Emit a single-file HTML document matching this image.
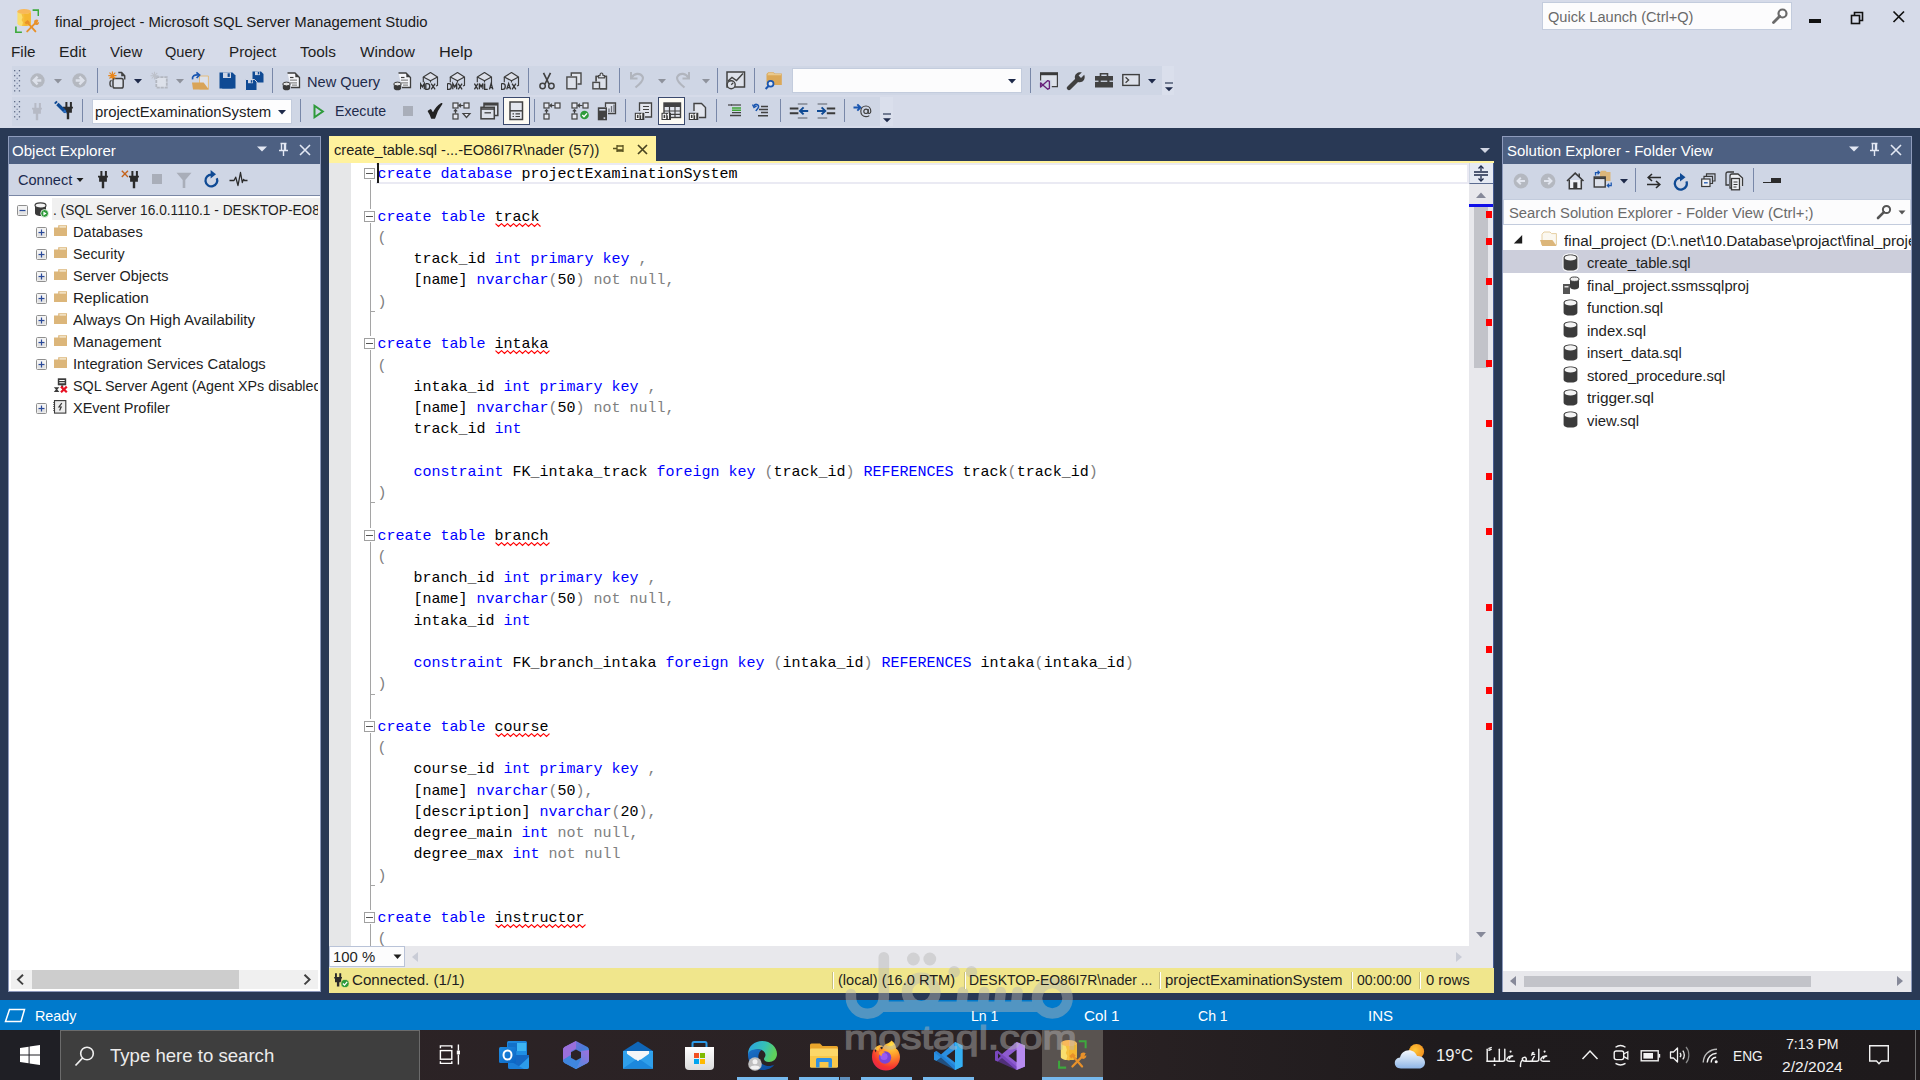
<!DOCTYPE html>
<html><head><meta charset="utf-8"><title>final_project - Microsoft SQL Server Management Studio</title>
<style>
html,body{margin:0;padding:0;}
body{width:1920px;height:1080px;overflow:hidden;position:relative;background:#293955;font-family:"Liberation Sans",sans-serif;}
.t{position:absolute;white-space:pre;transform-origin:0 0;font-family:"Liberation Sans",sans-serif;}
.c{position:absolute;left:377.4px;white-space:pre;font-family:"Liberation Mono",monospace;font-size:15px;line-height:21px;height:21px;color:#000;}
.c b{font-weight:400;color:#0000ff;}
.c i{font-style:normal;color:#808080;}
.c u{text-decoration:none;background:repeat-x left bottom;}
</style></head><body>
<!-- gen_top -->
<div style="position:absolute;left:0px;top:0px;width:1920px;height:128px;background:#D6DBE9;"></div>
<svg style="position:absolute;left:15px;top:8.8px;" width="24.3" height="24.3" viewBox="0 0 24.3 24.3"><path d="M2.4 2.6 V14.4 C2.4 15.9 5.4 17.1 9.1 17.1 C12.8 17.1 15.9 15.9 15.9 14.4 V2.6 Z" fill="#F9DE6E"/>
<path d="M9.1 5 V17.1 C12.8 17.1 15.9 15.9 15.9 14.4 V2.6 C15.9 4 12.8 5 9.1 5 Z" fill="#F5B731"/>
<path d="M6.5 4.9 L7.6 8.5 L6.6 11 L8 13.5 L7 17 L9.1 17.1 V5 Z" fill="#F5B731" opacity="0.8"/>
<ellipse cx="9.15" cy="2.6" rx="6.75" ry="2.5" fill="#F8B85A"/>
<path d="M17.6 1.1 H23.4 V6.9" fill="none" stroke="#3DAA3D" stroke-width="1.7"/>
<path d="M0.9 17.6 V23.4 H6.9" fill="none" stroke="#3DAA3D" stroke-width="1.7"/>
<path d="M12.6 13.6 L20.4 22.4" stroke="#E8912A" stroke-width="1.9" stroke-linecap="round"/>
<path d="M22 12.4 L12.2 22.4" stroke="#E8912A" stroke-width="1.9" stroke-linecap="round"/>
<path d="M9.6 13.6 L12.6 11 L14.9 13.2 L14 14.4 L13 13.8 L11.2 15.6 Z" fill="#E8912A"/>
<path d="M19.6 11.2 C21 10.2 22.6 10.4 23.6 11.4 L21.8 12.6 L22.4 13.8 L24 13 C24.2 14.6 23 16 21.4 16 C19.6 16 18.4 13 19.6 11.2 Z" fill="#E8912A"/></svg>
<span class="t" style="left:55.49px;top:13.00px;font-size:14.7px;line-height:18px;color:#1a1a1a;transform:scaleX(1.0133);">final_project - Microsoft SQL Server Management Studio</span>
<div style="position:absolute;left:1542px;top:2px;width:250px;height:28px;background:#FCFCFD;box-sizing:border-box;border:1px solid #C3CCDD;"></div>
<span class="t" style="left:1547.81px;top:8.00px;font-size:14.7px;line-height:18px;color:#6a6a6a;transform:scaleX(0.9929);">Quick Launch (Ctrl+Q)</span>
<svg style="position:absolute;left:1771px;top:7px;" width="18" height="18" viewBox="0 0 18 18"><circle cx="11.5" cy="6.5" r="4" fill="none" stroke="#6a6a6a" stroke-width="2.2"/><path d="M8.7 9.3 L2.5 15.5" stroke="#6a6a6a" stroke-width="2.8" stroke-linecap="round"/></svg>
<div style="position:absolute;left:1809px;top:19.4px;width:11.6px;height:3.4px;background:#111;"></div>
<svg style="position:absolute;left:1849px;top:10px;" width="16" height="16" viewBox="0 0 16 16"><rect x="2.5" y="5.5" width="8" height="8" fill="none" stroke="#111" stroke-width="1.6"/><path d="M5.5 5 V2.5 H13.5 V10.5 H11" fill="none" stroke="#111" stroke-width="1.6"/></svg>
<svg style="position:absolute;left:1891px;top:9px;" width="16" height="16" viewBox="0 0 16 16"><path d="M2.5 2.5 L13 13 M13 2.5 L2.5 13" stroke="#111" stroke-width="1.7"/></svg>
<span class="t" style="left:10.75px;top:43.00px;font-size:14.7px;line-height:18px;color:#1e1e1e;transform:scaleX(1.0400);">File</span>
<span class="t" style="left:59.01px;top:43.00px;font-size:14.7px;line-height:18px;color:#1e1e1e;transform:scaleX(1.0701);">Edit</span>
<span class="t" style="left:109.93px;top:43.00px;font-size:14.7px;line-height:18px;color:#1e1e1e;transform:scaleX(1.0232);">View</span>
<span class="t" style="left:165.31px;top:43.00px;font-size:14.7px;line-height:18px;color:#1e1e1e;transform:scaleX(0.9922);">Query</span>
<span class="t" style="left:228.75px;top:43.00px;font-size:14.7px;line-height:18px;color:#1e1e1e;transform:scaleX(1.0352);">Project</span>
<span class="t" style="left:299.65px;top:43.00px;font-size:14.7px;line-height:18px;color:#1e1e1e;transform:scaleX(1.0462);">Tools</span>
<span class="t" style="left:359.93px;top:43.00px;font-size:14.7px;line-height:18px;color:#1e1e1e;transform:scaleX(1.0525);">Window</span>
<span class="t" style="left:438.65px;top:43.00px;font-size:14.7px;line-height:18px;color:#1e1e1e;transform:scaleX(1.1158);">Help</span>
<div style="position:absolute;left:12px;top:66px;width:1150px;height:29px;background:#CFD6E5;"></div>
<div style="position:absolute;left:1162px;top:66px;width:12px;height:29px;background:#DADFEC;"></div>
<div style="position:absolute;left:12px;top:97px;width:868px;height:29px;background:#CFD6E5;"></div>
<div style="position:absolute;left:880px;top:97px;width:13px;height:29px;background:#DADFEC;"></div>
<!-- gen_oe -->
<div style="position:absolute;left:8px;top:136px;width:313px;height:856px;background:#8E9BBC;"></div>
<div style="position:absolute;left:9px;top:137px;width:311px;height:27px;background:#4D6082;"></div>
<span class="t" style="left:12.49px;top:142.00px;font-size:14.7px;line-height:18px;color:#ffffff;transform:scaleX(1.0262);">Object Explorer</span>
<svg style="position:absolute;left:256px;top:145px;" width="12" height="8" viewBox="0 0 12 8"><path d="M1 1.5 H11 L6 6.5 Z" fill="#E3E8F4"/></svg>
<svg style="position:absolute;left:277px;top:142px;" width="13" height="15" viewBox="0 0 13 15"><path d="M3.5 1.5 H9.5 M4.5 1.5 V8 M8.5 1.5 V8 M7.5 1.5 V8 M2 8.5 H11 M6.5 9 V14" stroke="#E3E8F4" stroke-width="1.4" fill="none"/></svg>
<svg style="position:absolute;left:298px;top:143px;" width="14" height="14" viewBox="0 0 14 14"><path d="M2 2 L12 12 M12 2 L2 12" stroke="#E3E8F4" stroke-width="1.6"/></svg>
<div style="position:absolute;left:9px;top:164px;width:311px;height:32px;background:#CFD6E5;"></div>
<span class="t" style="left:17.66px;top:171.00px;font-size:14.7px;line-height:18px;color:#1B2A4E;transform:scaleX(0.9908);">Connect</span>
<svg style="position:absolute;left:76px;top:177px;" width="8" height="6" viewBox="0 0 8 6"><path d="M0.5 1 H7.5 L4 5 Z" fill="#1e1e1e"/></svg>
<div style="position:absolute;left:9px;top:196px;width:311px;height:795px;background:#ffffff;"></div>
<div style="position:absolute;left:52px;top:198px;width:268px;height:22px;background:#F0F0F0;"></div>
<svg style="position:absolute;left:17px;top:205px;" width="11" height="11" viewBox="0 0 11 11"><rect x="0.5" y="0.5" width="10" height="10" rx="1" fill="#F4F4F4" stroke="#8f8f8f" stroke-width="1"/><rect x="1.5" y="6" width="8" height="3.5" fill="#E2E2E2"/><path d="M2.5 5.5 H8.5" stroke="#2A4A9A" stroke-width="1.2"/></svg>
<div style="position:absolute;left:0;top:0;width:318px;height:1080px;overflow:hidden"><span class="t" style="left:52.66px;top:200.70px;font-size:14.7px;line-height:18px;color:#1e1e1e;transform:scaleX(0.9333);">. (SQL Server 16.0.1110.1 - DESKTOP-EO86I7R\nader)</span></div>
<span class="t" style="left:73.30px;top:222.90px;font-size:14.7px;line-height:18px;color:#1e1e1e;transform:scaleX(0.9921);">Databases</span>
<svg style="position:absolute;left:36px;top:227px;" width="11" height="11" viewBox="0 0 11 11"><rect x="0.5" y="0.5" width="10" height="10" rx="1" fill="#F4F4F4" stroke="#8f8f8f" stroke-width="1"/><rect x="1.5" y="6" width="8" height="3.5" fill="#E2E2E2"/><path d="M2.5 5.5 H8.5" stroke="#2A4A9A" stroke-width="1.2"/><path d="M5.5 2.5 V8.5" stroke="#2A4A9A" stroke-width="1.2"/></svg>
<svg style="position:absolute;left:54px;top:225px;" width="13" height="11" viewBox="0 0 13 11"><path d="M0 2.6 H4.2 V0.2 H13 V11 H0 Z" fill="#DCB67A"/><path d="M5.4 1.2 H12 V2.6 H5.4 Z" fill="#F6EBD4"/></svg>
<span class="t" style="left:73.30px;top:244.90px;font-size:14.7px;line-height:18px;color:#1e1e1e;transform:scaleX(0.9713);">Security</span>
<svg style="position:absolute;left:36px;top:249px;" width="11" height="11" viewBox="0 0 11 11"><rect x="0.5" y="0.5" width="10" height="10" rx="1" fill="#F4F4F4" stroke="#8f8f8f" stroke-width="1"/><rect x="1.5" y="6" width="8" height="3.5" fill="#E2E2E2"/><path d="M2.5 5.5 H8.5" stroke="#2A4A9A" stroke-width="1.2"/><path d="M5.5 2.5 V8.5" stroke="#2A4A9A" stroke-width="1.2"/></svg>
<svg style="position:absolute;left:54px;top:247px;" width="13" height="11" viewBox="0 0 13 11"><path d="M0 2.6 H4.2 V0.2 H13 V11 H0 Z" fill="#DCB67A"/><path d="M5.4 1.2 H12 V2.6 H5.4 Z" fill="#F6EBD4"/></svg>
<span class="t" style="left:73.30px;top:266.90px;font-size:14.7px;line-height:18px;color:#1e1e1e;transform:scaleX(0.9832);">Server Objects</span>
<svg style="position:absolute;left:36px;top:271px;" width="11" height="11" viewBox="0 0 11 11"><rect x="0.5" y="0.5" width="10" height="10" rx="1" fill="#F4F4F4" stroke="#8f8f8f" stroke-width="1"/><rect x="1.5" y="6" width="8" height="3.5" fill="#E2E2E2"/><path d="M2.5 5.5 H8.5" stroke="#2A4A9A" stroke-width="1.2"/><path d="M5.5 2.5 V8.5" stroke="#2A4A9A" stroke-width="1.2"/></svg>
<svg style="position:absolute;left:54px;top:269px;" width="13" height="11" viewBox="0 0 13 11"><path d="M0 2.6 H4.2 V0.2 H13 V11 H0 Z" fill="#DCB67A"/><path d="M5.4 1.2 H12 V2.6 H5.4 Z" fill="#F6EBD4"/></svg>
<span class="t" style="left:73.30px;top:288.90px;font-size:14.7px;line-height:18px;color:#1e1e1e;transform:scaleX(1.0444);">Replication</span>
<svg style="position:absolute;left:36px;top:293px;" width="11" height="11" viewBox="0 0 11 11"><rect x="0.5" y="0.5" width="10" height="10" rx="1" fill="#F4F4F4" stroke="#8f8f8f" stroke-width="1"/><rect x="1.5" y="6" width="8" height="3.5" fill="#E2E2E2"/><path d="M2.5 5.5 H8.5" stroke="#2A4A9A" stroke-width="1.2"/><path d="M5.5 2.5 V8.5" stroke="#2A4A9A" stroke-width="1.2"/></svg>
<svg style="position:absolute;left:54px;top:291px;" width="13" height="11" viewBox="0 0 13 11"><path d="M0 2.6 H4.2 V0.2 H13 V11 H0 Z" fill="#DCB67A"/><path d="M5.4 1.2 H12 V2.6 H5.4 Z" fill="#F6EBD4"/></svg>
<span class="t" style="left:73.30px;top:310.90px;font-size:14.7px;line-height:18px;color:#1e1e1e;transform:scaleX(1.0296);">Always On High Availability</span>
<svg style="position:absolute;left:36px;top:315px;" width="11" height="11" viewBox="0 0 11 11"><rect x="0.5" y="0.5" width="10" height="10" rx="1" fill="#F4F4F4" stroke="#8f8f8f" stroke-width="1"/><rect x="1.5" y="6" width="8" height="3.5" fill="#E2E2E2"/><path d="M2.5 5.5 H8.5" stroke="#2A4A9A" stroke-width="1.2"/><path d="M5.5 2.5 V8.5" stroke="#2A4A9A" stroke-width="1.2"/></svg>
<svg style="position:absolute;left:54px;top:313px;" width="13" height="11" viewBox="0 0 13 11"><path d="M0 2.6 H4.2 V0.2 H13 V11 H0 Z" fill="#DCB67A"/><path d="M5.4 1.2 H12 V2.6 H5.4 Z" fill="#F6EBD4"/></svg>
<span class="t" style="left:73.30px;top:332.90px;font-size:14.7px;line-height:18px;color:#1e1e1e;transform:scaleX(1.0297);">Management</span>
<svg style="position:absolute;left:36px;top:337px;" width="11" height="11" viewBox="0 0 11 11"><rect x="0.5" y="0.5" width="10" height="10" rx="1" fill="#F4F4F4" stroke="#8f8f8f" stroke-width="1"/><rect x="1.5" y="6" width="8" height="3.5" fill="#E2E2E2"/><path d="M2.5 5.5 H8.5" stroke="#2A4A9A" stroke-width="1.2"/><path d="M5.5 2.5 V8.5" stroke="#2A4A9A" stroke-width="1.2"/></svg>
<svg style="position:absolute;left:54px;top:335px;" width="13" height="11" viewBox="0 0 13 11"><path d="M0 2.6 H4.2 V0.2 H13 V11 H0 Z" fill="#DCB67A"/><path d="M5.4 1.2 H12 V2.6 H5.4 Z" fill="#F6EBD4"/></svg>
<span class="t" style="left:73.30px;top:354.90px;font-size:14.7px;line-height:18px;color:#1e1e1e;transform:scaleX(1.0046);">Integration Services Catalogs</span>
<svg style="position:absolute;left:36px;top:359px;" width="11" height="11" viewBox="0 0 11 11"><rect x="0.5" y="0.5" width="10" height="10" rx="1" fill="#F4F4F4" stroke="#8f8f8f" stroke-width="1"/><rect x="1.5" y="6" width="8" height="3.5" fill="#E2E2E2"/><path d="M2.5 5.5 H8.5" stroke="#2A4A9A" stroke-width="1.2"/><path d="M5.5 2.5 V8.5" stroke="#2A4A9A" stroke-width="1.2"/></svg>
<svg style="position:absolute;left:54px;top:357px;" width="13" height="11" viewBox="0 0 13 11"><path d="M0 2.6 H4.2 V0.2 H13 V11 H0 Z" fill="#DCB67A"/><path d="M5.4 1.2 H12 V2.6 H5.4 Z" fill="#F6EBD4"/></svg>
<div style="position:absolute;left:0;top:0;width:318px;height:1080px;overflow:hidden"><span class="t" style="left:73.30px;top:376.90px;font-size:14.7px;line-height:18px;color:#1e1e1e;transform:scaleX(0.9743);">SQL Server Agent (Agent XPs disabled)</span></div>
<span class="t" style="left:73.30px;top:398.90px;font-size:14.7px;line-height:18px;color:#1e1e1e;transform:scaleX(0.9880);">XEvent Profiler</span>
<svg style="position:absolute;left:36px;top:403px;" width="11" height="11" viewBox="0 0 11 11"><rect x="0.5" y="0.5" width="10" height="10" rx="1" fill="#F4F4F4" stroke="#8f8f8f" stroke-width="1"/><rect x="1.5" y="6" width="8" height="3.5" fill="#E2E2E2"/><path d="M2.5 5.5 H8.5" stroke="#2A4A9A" stroke-width="1.2"/><path d="M5.5 2.5 V8.5" stroke="#2A4A9A" stroke-width="1.2"/></svg>
<svg style="position:absolute;left:98.2px;top:170.5px;" width="11" height="19" viewBox="0 0 11 19"><path d="M2.4 0 H4.4 V5 H2.4 Z M6.9 0 H8.9 V5 H6.9 Z" fill="#2b2b2b"/><path d="M0 4.8 H9.9 V6.6 H8.9 V10.8 H6.2 V17.3 H3.8 V10.8 H1.1 V6.6 H0 Z" fill="#2b2b2b"/></svg>
<svg style="position:absolute;left:121px;top:170px;" width="8" height="8" viewBox="0 0 8 8"><path d="M0.8 0.8 L7 7 M7 0.8 L0.8 7" stroke="#C4631C" stroke-width="1.4"/></svg>
<svg style="position:absolute;left:129px;top:170.5px;" width="11" height="19" viewBox="0 0 11 19"><path d="M2.4 0 H4.4 V5 H2.4 Z M6.9 0 H8.9 V5 H6.9 Z" fill="#2b2b2b"/><path d="M0 4.8 H9.9 V6.6 H8.9 V10.8 H6.2 V17.3 H3.8 V10.8 H1.1 V6.6 H0 Z" fill="#2b2b2b"/></svg>
<div style="position:absolute;left:152px;top:174px;width:10px;height:10px;background:#A9AEB9;"></div>
<svg style="position:absolute;left:176px;top:172px;" width="16" height="17" viewBox="0 0 16 17"><path d="M0.5 0.8 H15.5 L9.3 8 V16 H6.7 V8 Z" fill="#A9AEB9"/></svg>
<svg style="position:absolute;left:203px;top:169px;" width="17" height="20" viewBox="0 0 17 20"><path d="M13.8 9.2 A5.9 5.9 0 1 1 8.6 5.6" fill="none" stroke="#0F4A94" stroke-width="2.3"/><path d="M7.6 1 L13 5.2 L7.6 9.6 Z" fill="#0F4A94"/></svg>
<svg style="position:absolute;left:229px;top:171px;" width="19" height="16" viewBox="0 0 19 16"><path d="M0.5 9.5 H5 L6.7 6.2 L9 14.5 L11.5 1.5 L13.3 11.5 L14.6 8.3 L15.5 9.5 H18.5" fill="none" stroke="#2b2b2b" stroke-width="1.3" stroke-linejoin="round"/></svg>
<div style="position:absolute;left:9px;top:195px;width:311px;height:1px;background:#7A87A5;"></div>
<svg style="position:absolute;left:34px;top:202px;" width="15" height="16" viewBox="0 0 15 16"><path d="M1 3.5 V11 C1 12.8 3.5 14 6.5 14 C9.5 14 12 12.8 12 11 V3.5 Z" fill="#3a3a3a"/><ellipse cx="6.5" cy="3.5" rx="5.5" ry="2.6" fill="#F4F4F4" stroke="#3a3a3a" stroke-width="1.1"/><circle cx="10.6" cy="11.4" r="3.9" fill="#2E9B3A" stroke="#fff" stroke-width="0.8"/><path d="M9.4 9.4 V13.4 L12.6 11.4 Z" fill="#fff"/></svg>
<svg style="position:absolute;left:53px;top:378px;" width="15" height="15" viewBox="0 0 15 15"><rect x="4.8" y="0.3" width="8.4" height="7" fill="#3a3a3a"/><path d="M6.3 2.5 H11.7 M6.3 4.8 H11.7" stroke="#fff" stroke-width="1.1"/><path d="M8.2 7.3 H10.2 V9 H8.2 Z" fill="#3a3a3a"/><path d="M0.8 9.3 H6.4 L4.3 11.6 L6.4 14 H0.8 L2.9 11.6 Z" fill="#3a3a3a"/><path d="M8 8.6 L13.8 14.2 M13.8 8.6 L8 14.2" stroke="#E81123" stroke-width="2.2"/></svg>
<svg style="position:absolute;left:53px;top:400px;" width="14" height="14" viewBox="0 0 14 14"><rect x="1.5" y="0.6" width="11.3" height="12.5" fill="#EDEDED" stroke="#3a3a3a" stroke-width="1.1"/><path d="M0.3 2.5 H2 M0.3 4.5 H2 M0.3 6.5 H2 M0.3 8.5 H2 M0.3 10.5 H2" stroke="#3a3a3a" stroke-width="0.9"/><path d="M8.8 3.2 L6 7 H8.2 L6.6 10.4" fill="none" stroke="#3a3a3a" stroke-width="1.2"/></svg>
<div style="position:absolute;left:11px;top:970px;width:307px;height:19px;background:#F0F0F0;"></div>
<div style="position:absolute;left:32px;top:970px;width:207px;height:19px;background:#CDCDCD;"></div>
<svg style="position:absolute;left:14px;top:972px;" width="12" height="15" viewBox="0 0 12 15"><path d="M9 2.8 L4 7.6 L9 12.4" fill="none" stroke="#404040" stroke-width="2"/></svg>
<svg style="position:absolute;left:301px;top:972px;" width="12" height="15" viewBox="0 0 12 15"><path d="M3.5 2.8 L8.5 7.6 L3.5 12.4" fill="none" stroke="#404040" stroke-width="2"/></svg>
<!-- gen_editor -->
<div style="position:absolute;left:329px;top:136px;width:327px;height:25px;background:#FFF29D;"></div>
<div style="position:absolute;left:329px;top:161px;width:1165px;height:2px;background:#FFF29D;"></div>
<span class="t" style="left:333.68px;top:140.50px;font-size:14.7px;line-height:18px;color:#1e1e1e;transform:scaleX(0.9938);">create_table.sql -...-EO86I7R\nader (57))</span>
<svg style="position:absolute;left:612px;top:143px;" width="13" height="11" viewBox="0 0 13 11"><path d="M1 5.5 H5 M5 2 V9 M5 3 H11 M5 7 H11 M5 8 H11 M11 2 V9" stroke="#5a5320" stroke-width="1.3" fill="none"/></svg>
<svg style="position:absolute;left:636px;top:143px;" width="13" height="13" viewBox="0 0 13 13"><path d="M2 2 L11 11 M11 2 L2 11" stroke="#4a4520" stroke-width="1.7"/></svg>
<svg style="position:absolute;left:1479px;top:147px;" width="12" height="7" viewBox="0 0 12 7"><path d="M1 1 H11 L6 6 Z" fill="#D0D5E2"/></svg>
<div style="position:absolute;left:329px;top:163px;width:1140px;height:783px;background:#ffffff;"></div>
<div style="position:absolute;left:329px;top:163px;width:22px;height:783px;background:#E6E7E8;"></div>
<div style="position:absolute;left:376px;top:163px;width:1093px;height:21px;background:transparent;box-sizing:border-box;border:2px solid #EAEAF3;border-left:none;"></div>
<div style="position:absolute;left:370px;top:179px;width:1px;height:767px;background:#A5A5A5;"></div>
<div class="c" style="top:164px"><b>create</b> <b>database</b> projectExaminationSystem</div>
<div style="position:absolute;left:370px;top:166px;width:1px;height:2px;background:#fff;"></div>
<div style="position:absolute;left:370px;top:179px;width:1px;height:1px;background:#fff;"></div>
<svg style="position:absolute;left:364px;top:168px;" width="11" height="11" viewBox="0 0 11 11"><rect x="0.5" y="0.5" width="10" height="10" fill="#fff" stroke="#A0A0A0"/><path d="M2 5.5 H9" stroke="#555" stroke-width="1"/></svg>
<div class="c" style="top:207px"><b>create</b> <b>table</b> <u>track</u></div>
<svg style="position:absolute;left:495px;top:223px;" width="47" height="5" viewBox="0 0 47 5"><polyline points="0.5,0.7 3.5,3.5 6.5,0.7 9.5,3.5 12.5,0.7 15.5,3.5 18.5,0.7 21.5,3.5 24.5,0.7 27.5,3.5 30.5,0.7 33.5,3.5 36.5,0.7 39.5,3.5 42.5,0.7 45.5,3.5" fill="none" stroke="#FF0000" stroke-width="1.15"/></svg>
<div style="position:absolute;left:370px;top:209px;width:1px;height:2px;background:#fff;"></div>
<div style="position:absolute;left:370px;top:222px;width:1px;height:1px;background:#fff;"></div>
<svg style="position:absolute;left:364px;top:211px;" width="11" height="11" viewBox="0 0 11 11"><rect x="0.5" y="0.5" width="10" height="10" fill="#fff" stroke="#A0A0A0"/><path d="M2 5.5 H9" stroke="#555" stroke-width="1"/></svg>
<div class="c" style="top:228px"><i>(</i></div>
<div class="c" style="top:249px">    track_id <b>int</b> <b>primary</b> <b>key</b> <i>,</i></div>
<div class="c" style="top:270px">    [name] <b>nvarchar</b><i>(</i>50<i>)</i> <i>not</i> <i>null</i><i>,</i></div>
<div class="c" style="top:292px"><i>)</i></div>
<div style="position:absolute;left:370px;top:311px;width:5px;height:1px;background:#A5A5A5;"></div>
<div class="c" style="top:334px"><b>create</b> <b>table</b> <u>intaka</u></div>
<svg style="position:absolute;left:495px;top:350px;" width="56" height="5" viewBox="0 0 56 5"><polyline points="0.5,0.7 3.5,3.5 6.5,0.7 9.5,3.5 12.5,0.7 15.5,3.5 18.5,0.7 21.5,3.5 24.5,0.7 27.5,3.5 30.5,0.7 33.5,3.5 36.5,0.7 39.5,3.5 42.5,0.7 45.5,3.5 48.5,0.7 51.5,3.5 54.5,0.7" fill="none" stroke="#FF0000" stroke-width="1.15"/></svg>
<div style="position:absolute;left:370px;top:336px;width:1px;height:2px;background:#fff;"></div>
<div style="position:absolute;left:370px;top:349px;width:1px;height:1px;background:#fff;"></div>
<svg style="position:absolute;left:364px;top:338px;" width="11" height="11" viewBox="0 0 11 11"><rect x="0.5" y="0.5" width="10" height="10" fill="#fff" stroke="#A0A0A0"/><path d="M2 5.5 H9" stroke="#555" stroke-width="1"/></svg>
<div class="c" style="top:356px"><i>(</i></div>
<div class="c" style="top:377px">    intaka_id <b>int</b> <b>primary</b> <b>key</b> <i>,</i></div>
<div class="c" style="top:398px">    [name] <b>nvarchar</b><i>(</i>50<i>)</i> <i>not</i> <i>null</i><i>,</i></div>
<div class="c" style="top:419px">    track_id <b>int</b></div>
<div class="c" style="top:462px">    <b>constraint</b> FK_intaka_track <b>foreign</b> <b>key</b> <i>(</i>track_id<i>)</i> <b>REFERENCES</b> track<i>(</i>track_id<i>)</i></div>
<div class="c" style="top:483px"><i>)</i></div>
<div style="position:absolute;left:370px;top:502px;width:5px;height:1px;background:#A5A5A5;"></div>
<div class="c" style="top:526px"><b>create</b> <b>table</b> <u>branch</u></div>
<svg style="position:absolute;left:495px;top:542px;" width="56" height="5" viewBox="0 0 56 5"><polyline points="0.5,0.7 3.5,3.5 6.5,0.7 9.5,3.5 12.5,0.7 15.5,3.5 18.5,0.7 21.5,3.5 24.5,0.7 27.5,3.5 30.5,0.7 33.5,3.5 36.5,0.7 39.5,3.5 42.5,0.7 45.5,3.5 48.5,0.7 51.5,3.5 54.5,0.7" fill="none" stroke="#FF0000" stroke-width="1.15"/></svg>
<div style="position:absolute;left:370px;top:528px;width:1px;height:2px;background:#fff;"></div>
<div style="position:absolute;left:370px;top:541px;width:1px;height:1px;background:#fff;"></div>
<svg style="position:absolute;left:364px;top:530px;" width="11" height="11" viewBox="0 0 11 11"><rect x="0.5" y="0.5" width="10" height="10" fill="#fff" stroke="#A0A0A0"/><path d="M2 5.5 H9" stroke="#555" stroke-width="1"/></svg>
<div class="c" style="top:547px"><i>(</i></div>
<div class="c" style="top:568px">    branch_id <b>int</b> <b>primary</b> <b>key</b> <i>,</i></div>
<div class="c" style="top:589px">    [name] <b>nvarchar</b><i>(</i>50<i>)</i> <i>not</i> <i>null</i><i>,</i></div>
<div class="c" style="top:611px">    intaka_id <b>int</b></div>
<div class="c" style="top:653px">    <b>constraint</b> FK_branch_intaka <b>foreign</b> <b>key</b> <i>(</i>intaka_id<i>)</i> <b>REFERENCES</b> intaka<i>(</i>intaka_id<i>)</i></div>
<div class="c" style="top:674px"><i>)</i></div>
<div style="position:absolute;left:370px;top:694px;width:5px;height:1px;background:#A5A5A5;"></div>
<div class="c" style="top:717px"><b>create</b> <b>table</b> <u>course</u></div>
<svg style="position:absolute;left:495px;top:733px;" width="56" height="5" viewBox="0 0 56 5"><polyline points="0.5,0.7 3.5,3.5 6.5,0.7 9.5,3.5 12.5,0.7 15.5,3.5 18.5,0.7 21.5,3.5 24.5,0.7 27.5,3.5 30.5,0.7 33.5,3.5 36.5,0.7 39.5,3.5 42.5,0.7 45.5,3.5 48.5,0.7 51.5,3.5 54.5,0.7" fill="none" stroke="#FF0000" stroke-width="1.15"/></svg>
<div style="position:absolute;left:370px;top:719px;width:1px;height:2px;background:#fff;"></div>
<div style="position:absolute;left:370px;top:732px;width:1px;height:1px;background:#fff;"></div>
<svg style="position:absolute;left:364px;top:721px;" width="11" height="11" viewBox="0 0 11 11"><rect x="0.5" y="0.5" width="10" height="10" fill="#fff" stroke="#A0A0A0"/><path d="M2 5.5 H9" stroke="#555" stroke-width="1"/></svg>
<div class="c" style="top:738px"><i>(</i></div>
<div class="c" style="top:759px">    course_id <b>int</b> <b>primary</b> <b>key</b> <i>,</i></div>
<div class="c" style="top:781px">    [name] <b>nvarchar</b><i>(</i>50<i>)</i><i>,</i></div>
<div class="c" style="top:802px">    [description] <b>nvarchar</b><i>(</i>20<i>)</i><i>,</i></div>
<div class="c" style="top:823px">    degree_main <b>int</b> <i>not</i> <i>null</i><i>,</i></div>
<div class="c" style="top:844px">    degree_max <b>int</b> <i>not</i> <i>null</i></div>
<div class="c" style="top:866px"><i>)</i></div>
<div style="position:absolute;left:370px;top:885px;width:5px;height:1px;background:#A5A5A5;"></div>
<div class="c" style="top:908px"><b>create</b> <b>table</b> <u>instructor</u></div>
<svg style="position:absolute;left:495px;top:924px;" width="92" height="5" viewBox="0 0 92 5"><polyline points="0.5,0.7 3.5,3.5 6.5,0.7 9.5,3.5 12.5,0.7 15.5,3.5 18.5,0.7 21.5,3.5 24.5,0.7 27.5,3.5 30.5,0.7 33.5,3.5 36.5,0.7 39.5,3.5 42.5,0.7 45.5,3.5 48.5,0.7 51.5,3.5 54.5,0.7 57.5,3.5 60.5,0.7 63.5,3.5 66.5,0.7 69.5,3.5 72.5,0.7 75.5,3.5 78.5,0.7 81.5,3.5 84.5,0.7 87.5,3.5 90.5,0.7" fill="none" stroke="#FF0000" stroke-width="1.15"/></svg>
<div style="position:absolute;left:370px;top:910px;width:1px;height:2px;background:#fff;"></div>
<div style="position:absolute;left:370px;top:923px;width:1px;height:1px;background:#fff;"></div>
<svg style="position:absolute;left:364px;top:912px;" width="11" height="11" viewBox="0 0 11 11"><rect x="0.5" y="0.5" width="10" height="10" fill="#fff" stroke="#A0A0A0"/><path d="M2 5.5 H9" stroke="#555" stroke-width="1"/></svg>
<div class="c" style="top:929px"><i>(</i></div>
<div style="position:absolute;left:377px;top:163px;width:2px;height:20px;background:#1a1a1a;"></div>
<div style="position:absolute;left:1469px;top:163px;width:25px;height:783px;background:#E8E8EC;"></div>
<div style="position:absolute;left:1493px;top:163px;width:1px;height:805px;background:#475C90;"></div>
<div style="position:absolute;left:1469px;top:163px;width:24px;height:21px;background:#E6EAF3;box-sizing:border-box;border-bottom:1px solid #5B6B90;border-left:1px solid #D0D6E4;"></div>
<svg style="position:absolute;left:1472px;top:165px;" width="18" height="17" viewBox="0 0 18 17"><path d="M2 7 H16 M2 10 H16" stroke="#1e2a4a" stroke-width="1.3"/><path d="M9 1 V6 M9 11 V16" stroke="#1e2a4a" stroke-width="1.3"/><path d="M6.5 3.5 L9 1 L11.5 3.5 M6.5 13.5 L9 16 L11.5 13.5" fill="none" stroke="#1e2a4a" stroke-width="1.3"/></svg>
<svg style="position:absolute;left:1475px;top:191px;" width="12" height="8" viewBox="0 0 12 8"><path d="M1 7 L6 1.5 L11 7 Z" fill="#868999"/></svg>
<svg style="position:absolute;left:1475px;top:931px;" width="12" height="8" viewBox="0 0 12 8"><path d="M1 1 L6 6.5 L11 1 Z" fill="#868999"/></svg>
<div style="position:absolute;left:1474px;top:207px;width:14px;height:161px;background:#C2C3C9;"></div>
<div style="position:absolute;left:1469px;top:204px;width:24px;height:3px;background:#1010E8;"></div>
<div style="position:absolute;left:1486px;top:211px;width:6px;height:7px;background:#FF0000;"></div>
<div style="position:absolute;left:1486px;top:238px;width:6px;height:7px;background:#FF0000;"></div>
<div style="position:absolute;left:1486px;top:278px;width:6px;height:7px;background:#FF0000;"></div>
<div style="position:absolute;left:1486px;top:319px;width:6px;height:7px;background:#FF0000;"></div>
<div style="position:absolute;left:1486px;top:360px;width:6px;height:7px;background:#FF0000;"></div>
<div style="position:absolute;left:1486px;top:420px;width:6px;height:7px;background:#FF0000;"></div>
<div style="position:absolute;left:1486px;top:473px;width:6px;height:7px;background:#FF0000;"></div>
<div style="position:absolute;left:1486px;top:528px;width:6px;height:7px;background:#FF0000;"></div>
<div style="position:absolute;left:1486px;top:604px;width:6px;height:7px;background:#FF0000;"></div>
<div style="position:absolute;left:1486px;top:646px;width:6px;height:7px;background:#FF0000;"></div>
<div style="position:absolute;left:1486px;top:687px;width:6px;height:7px;background:#FF0000;"></div>
<div style="position:absolute;left:1486px;top:723px;width:6px;height:7px;background:#FF0000;"></div>
<div style="position:absolute;left:329px;top:946px;width:1140px;height:22px;background:#E8E8EC;"></div>
<div style="position:absolute;left:1469px;top:946px;width:25px;height:22px;background:#E8E8EC;"></div>
<div style="position:absolute;left:329px;top:946px;width:76px;height:21px;background:#FCFCFD;box-sizing:border-box;border:1px solid #B9C3D8;"></div>
<span class="t" style="left:332.67px;top:948.00px;font-size:14.7px;line-height:18px;color:#1e1e1e;transform:scaleX(1.0116);">100 %</span>
<svg style="position:absolute;left:393px;top:954px;" width="9" height="6" viewBox="0 0 9 6"><path d="M0.5 0.5 H8.5 L4.5 5 Z" fill="#1e1e1e"/></svg>
<svg style="position:absolute;left:411px;top:951px;" width="8" height="12" viewBox="0 0 8 12"><path d="M7 1 L1 6 L7 11 Z" fill="#C9CCD6"/></svg>
<svg style="position:absolute;left:1455px;top:951px;" width="8" height="12" viewBox="0 0 8 12"><path d="M1 1 L7 6 L1 11 Z" fill="#C9CCD6"/></svg>
<div style="position:absolute;left:1493px;top:946px;width:1px;height:22px;background:#475C90;"></div>
<div style="position:absolute;left:329px;top:968px;width:1165px;height:25px;background:#F0E68C;"></div>
<svg style="position:absolute;left:332px;top:970px;" width="20" height="20" viewBox="0 0 20 20"><g transform="translate(-332,-970)"><path d="M335 973.2 H336.9 V977.4 H335 Z M339.3 973.2 H341.2 V977.4 H339.3 Z" fill="#2b2b2b"/><path d="M334.2 977 H342 V978.6 H341.2 V982.2 H339.3 V986.6 H336.9 V982.2 H335 V978.6 H334.2 Z" fill="#2b2b2b"/><circle cx="345" cy="983.5" r="4.1" fill="#2E9B3A" stroke="#F0E68C" stroke-width="0.7"/><path d="M342.9 983.5 L344.5 985.1 L347.2 981.9" fill="none" stroke="#fff" stroke-width="1.3"/></g></svg>
<span class="t" style="left:352.23px;top:971.00px;font-size:14.7px;line-height:18px;color:#1e1e1e;transform:scaleX(1.0293);">Connected. (1/1)</span>
<span class="t" style="left:1165.03px;top:971.00px;font-size:14.7px;line-height:18px;color:#1e1e1e;transform:scaleX(1.0209);">projectExaminationSystem</span>
<span class="t" style="left:1357.25px;top:971.00px;font-size:14.7px;line-height:18px;color:#1e1e1e;transform:scaleX(0.9541);">00:00:00</span>
<span class="t" style="left:1426.22px;top:971.00px;font-size:14.7px;line-height:18px;color:#1e1e1e;transform:scaleX(1.0073);">0 rows</span>
<div style="position:absolute;left:832px;top:972px;width:1px;height:17px;background:#C9C07A;"></div>
<div style="position:absolute;left:833px;top:972px;width:1px;height:17px;background:#FFFFFF;"></div>
<div style="position:absolute;left:964px;top:972px;width:1px;height:17px;background:#C9C07A;"></div>
<div style="position:absolute;left:965px;top:972px;width:1px;height:17px;background:#FFFFFF;"></div>
<div style="position:absolute;left:1159px;top:972px;width:1px;height:17px;background:#C9C07A;"></div>
<div style="position:absolute;left:1160px;top:972px;width:1px;height:17px;background:#FFFFFF;"></div>
<div style="position:absolute;left:1351px;top:972px;width:1px;height:17px;background:#C9C07A;"></div>
<div style="position:absolute;left:1352px;top:972px;width:1px;height:17px;background:#FFFFFF;"></div>
<div style="position:absolute;left:1419px;top:972px;width:1px;height:17px;background:#C9C07A;"></div>
<div style="position:absolute;left:1420px;top:972px;width:1px;height:17px;background:#FFFFFF;"></div>
<!-- gen_se -->
<div style="position:absolute;left:1502px;top:136px;width:410px;height:856px;background:#8E9BBC;"></div>
<div style="position:absolute;left:1503px;top:137px;width:408px;height:27px;background:#4D6082;"></div>
<span class="t" style="left:1506.72px;top:142.00px;font-size:14.7px;line-height:18px;color:#ffffff;transform:scaleX(1.0182);">Solution Explorer - Folder View</span>
<svg style="position:absolute;left:1848px;top:145px;" width="12" height="8" viewBox="0 0 12 8"><path d="M1 1.5 H11 L6 6.5 Z" fill="#E3E8F4"/></svg>
<svg style="position:absolute;left:1868px;top:142px;" width="13" height="15" viewBox="0 0 13 15"><path d="M3.5 1.5 H9.5 M4.5 1.5 V8 M8.5 1.5 V8 M7.5 1.5 V8 M2 8.5 H11 M6.5 9 V14" stroke="#E3E8F4" stroke-width="1.4" fill="none"/></svg>
<svg style="position:absolute;left:1889px;top:143px;" width="14" height="14" viewBox="0 0 14 14"><path d="M2 2 L12 12 M12 2 L2 12" stroke="#E3E8F4" stroke-width="1.6"/></svg>
<div style="position:absolute;left:1503px;top:164px;width:408px;height:35px;background:#CFD6E5;"></div>
<svg style="position:absolute;left:1513px;top:173px;" width="16" height="16" viewBox="0 0 16 16"><circle cx="8" cy="8" r="7.4" fill="#B4B8C0"/><path d="M12 8 H4.8 M7.8 4.8 L4.5 8 L7.8 11.2" fill="none" stroke="#E1E5EE" stroke-width="1.9"/></svg>
<svg style="position:absolute;left:1540px;top:173px;" width="16" height="16" viewBox="0 0 16 16"><circle cx="8" cy="8" r="7.4" fill="#B4B8C0"/><path d="M4 8 H11.2 M8.2 4.8 L11.5 8 L8.2 11.2" fill="none" stroke="#E1E5EE" stroke-width="1.9"/></svg>
<svg style="position:absolute;left:1566px;top:172px;" width="19" height="18" viewBox="0 0 19 18"><path d="M1 9 L9.2 1.2 L17.5 9" fill="none" stroke="#3a3a3a" stroke-width="1.6"/><path d="M13.2 1.5 V5" stroke="#3a3a3a" stroke-width="1.5"/><path d="M3.3 8 V16.8 H15.3 V8" fill="#EEF0F5" stroke="#3a3a3a" stroke-width="1.5"/><rect x="7.3" y="10.3" width="4" height="6.5" fill="#3a3a3a"/></svg>
<svg style="position:absolute;left:1593px;top:170px;" width="20" height="19" viewBox="0 0 20 19"><path d="M7 2 L8.5 0.8 H12.5 L13.8 2 H17.5 V11 H7 Z" fill="#DCB67A"/><rect x="1.2" y="7" width="11" height="10" fill="#DDE1EA" stroke="#3a3a3a" stroke-width="1.4"/><path d="M1.2 8.2 H12.2" stroke="#3a3a3a" stroke-width="1.8"/><path d="M2.5 5.5 V2.6 H6 M4.6 0.8 L6.4 2.6 L4.6 4.4" fill="none" stroke="#1A56B0" stroke-width="1.3"/><path d="M18.2 12.5 V15.6 H14.6 M16.2 13.8 L14.3 15.6 L16.2 17.4" fill="none" stroke="#1A56B0" stroke-width="1.3"/></svg>
<svg style="position:absolute;left:1620px;top:179px;" width="8" height="5" viewBox="0 0 8 5"><path d="M0 0 H8 L4 4.5 Z" fill="#1e2a4a"/></svg>
<div style="position:absolute;left:1635px;top:168px;width:1px;height:24px;background:#7887A8;"></div>
<svg style="position:absolute;left:1646px;top:173px;" width="16" height="16" viewBox="0 0 16 16"><path d="M15 4.5 H2.5 M6 1 L2.2 4.5 L6 8 M1 11.5 H13.5 M10 8 L13.8 11.5 L10 15" fill="none" stroke="#2b2b2b" stroke-width="1.6"/></svg>
<svg style="position:absolute;left:1672px;top:172px;" width="18" height="19" viewBox="0 0 18 19"><path d="M14.4 9.4 A6 6 0 1 1 9 5.6" fill="none" stroke="#0F4A94" stroke-width="2.3"/><path d="M8 1 L13.5 5.2 L8 9.6 Z" fill="#0F4A94"/></svg>
<svg style="position:absolute;left:1701px;top:173px;" width="15" height="15" viewBox="0 0 15 15"><path d="M5.5 3.5 V0.8 H14 V8 H11.5" fill="none" stroke="#3a3a3a" stroke-width="1.2"/><path d="M3 6 V3.3 H11.5 V10.5 H9" fill="none" stroke="#3a3a3a" stroke-width="1.2"/><rect x="0.7" y="6" width="8.3" height="7.5" fill="#EEF0F5" stroke="#3a3a3a" stroke-width="1.2"/><path d="M3 9.8 H6.7" stroke="#1A56B0" stroke-width="1.3"/></svg>
<svg style="position:absolute;left:1725px;top:171px;" width="20" height="20" viewBox="0 0 20 20"><path d="M4 14 H1 V3 Q1 1 3 1 H9" fill="none" stroke="#3a3a3a" stroke-width="1.3"/><path d="M8 17 H5 V5 Q5 3 7 3 H13 L17.5 7 V15" fill="#EEF0F5" stroke="#3a3a3a" stroke-width="1.3"/><rect x="6.5" y="7.5" width="8" height="11.3" fill="#EEF0F5" stroke="#3a3a3a" stroke-width="1.3"/><path d="M8.5 11 H12.5 M8.5 13.5 H12.5 M8.5 16 H11.5" stroke="#3a3a3a" stroke-width="1"/></svg>
<div style="position:absolute;left:1753px;top:168px;width:1px;height:24px;background:#7887A8;"></div>
<div style="position:absolute;left:1763px;top:182px;width:9px;height:1px;background:#2b2b2b;"></div>
<div style="position:absolute;left:1771px;top:178px;width:10px;height:5px;background:#2b2b2b;"></div>
<div style="position:absolute;left:1503px;top:199px;width:408px;height:26px;background:#FCFCFD;box-sizing:border-box;border:1px solid #C3CCDD;"></div>
<span class="t" style="left:1508.93px;top:203.80px;font-size:14.7px;line-height:18px;color:#6a6a6a;transform:scaleX(1.0078);">Search Solution Explorer - Folder View (Ctrl+;)</span>
<svg style="position:absolute;left:1875px;top:203px;" width="18" height="18" viewBox="0 0 18 18"><circle cx="11.5" cy="6.5" r="3.6" fill="none" stroke="#555" stroke-width="2"/><path d="M8.9 9.1 L3 15" stroke="#555" stroke-width="2.6" stroke-linecap="round"/></svg>
<svg style="position:absolute;left:1898px;top:210px;" width="8" height="5" viewBox="0 0 8 5"><path d="M0.5 0.5 H7.5 L4 4.5 Z" fill="#555"/></svg>
<div style="position:absolute;left:1503px;top:225px;width:408px;height:746px;background:#ffffff;"></div>
<div style="position:absolute;left:1503px;top:250px;width:408px;height:23px;background:#CCCEDB;"></div>
<svg style="position:absolute;left:1513px;top:234px;" width="10" height="10" viewBox="0 0 10 10"><path d="M9.2 0.9 V9.5 H0.8 Z" fill="#1e1e1e"/></svg>
<svg style="position:absolute;left:1538px;top:230px;" width="21" height="18" viewBox="0 0 21 18"><g transform="translate(-1538,-230)"><path d="M1542 234.2 L1544 232 H1550 L1551.6 233.6 H1556.4 V245 H1542 Z" fill="#FBF8F0" stroke="#E6CFA2" stroke-width="1"/><path d="M1540 240 H1552.4 L1556.6 245.9 H1542.2 Z" fill="#DCB67A"/></g></svg>
<div style="position:absolute;left:0;top:0;width:1911px;height:1080px;overflow:hidden"><span class="t" style="left:1564.49px;top:232.00px;font-size:14.7px;line-height:18px;color:#1e1e1e;transform:scaleX(1.0404);">final_project (D:\.net\10.Database\projact\final_project)</span></div>
<span class="t" style="left:1586.90px;top:254.20px;font-size:14.7px;line-height:18px;color:#1e1e1e;">create_table.sql</span>
<svg style="position:absolute;left:1562px;top:253px;" width="17" height="19" viewBox="0 0 17 19"><path d="M1.6 4.6 V14.4 C1.6 16.4 4.6 17.6 8.5 17.6 C12.4 17.6 15.4 16.4 15.4 14.4 V4.6 C15.4 2.6 12.4 1.4 8.5 1.4 C4.6 1.4 1.6 2.6 1.6 4.6 Z" fill="#fff" stroke="#fff" stroke-width="2.2" opacity="0.85"/><path d="M1.6 4.6 V14.4 C1.6 16.4 4.6 17.6 8.5 17.6 C12.4 17.6 15.4 16.4 15.4 14.4 V4.6 C15.4 2.6 12.4 1.4 8.5 1.4 C4.6 1.4 1.6 2.6 1.6 4.6 Z" fill="#3b3b3b"/><ellipse cx="8.5" cy="4.9" rx="5.9" ry="2.6" fill="#F4F4F4"/></svg>
<span class="t" style="left:1586.90px;top:276.70px;font-size:14.7px;line-height:18px;color:#1e1e1e;transform:scaleX(1.0078);">final_project.ssmssqlproj</span>
<svg style="position:absolute;left:1562px;top:276px;" width="18" height="19" viewBox="0 0 18 19"><rect x="1" y="8" width="7" height="10" fill="#555"/><rect x="2.5" y="10" width="4" height="1.5" fill="#ddd"/><path d="M8 3 V11 C8 12.5 10 13.5 12.5 13.5 C15 13.5 17 12.5 17 11 V3 Z" fill="#3b3b3b"/><ellipse cx="12.5" cy="3.2" rx="4.5" ry="2.2" fill="#eee" stroke="#3b3b3b"/></svg>
<span class="t" style="left:1586.90px;top:299.20px;font-size:14.7px;line-height:18px;color:#1e1e1e;transform:scaleX(1.0250);">function.sql</span>
<svg style="position:absolute;left:1562px;top:298px;" width="17" height="19" viewBox="0 0 17 19"><path d="M1.6 4.6 V14.4 C1.6 16.4 4.6 17.6 8.5 17.6 C12.4 17.6 15.4 16.4 15.4 14.4 V4.6 C15.4 2.6 12.4 1.4 8.5 1.4 C4.6 1.4 1.6 2.6 1.6 4.6 Z" fill="#fff" stroke="#fff" stroke-width="2.2" opacity="0.85"/><path d="M1.6 4.6 V14.4 C1.6 16.4 4.6 17.6 8.5 17.6 C12.4 17.6 15.4 16.4 15.4 14.4 V4.6 C15.4 2.6 12.4 1.4 8.5 1.4 C4.6 1.4 1.6 2.6 1.6 4.6 Z" fill="#3b3b3b"/><ellipse cx="8.5" cy="4.9" rx="5.9" ry="2.6" fill="#F4F4F4"/></svg>
<span class="t" style="left:1586.90px;top:321.70px;font-size:14.7px;line-height:18px;color:#1e1e1e;transform:scaleX(1.0169);">index.sql</span>
<svg style="position:absolute;left:1562px;top:320px;" width="17" height="19" viewBox="0 0 17 19"><path d="M1.6 4.6 V14.4 C1.6 16.4 4.6 17.6 8.5 17.6 C12.4 17.6 15.4 16.4 15.4 14.4 V4.6 C15.4 2.6 12.4 1.4 8.5 1.4 C4.6 1.4 1.6 2.6 1.6 4.6 Z" fill="#fff" stroke="#fff" stroke-width="2.2" opacity="0.85"/><path d="M1.6 4.6 V14.4 C1.6 16.4 4.6 17.6 8.5 17.6 C12.4 17.6 15.4 16.4 15.4 14.4 V4.6 C15.4 2.6 12.4 1.4 8.5 1.4 C4.6 1.4 1.6 2.6 1.6 4.6 Z" fill="#3b3b3b"/><ellipse cx="8.5" cy="4.9" rx="5.9" ry="2.6" fill="#F4F4F4"/></svg>
<span class="t" style="left:1586.90px;top:344.20px;font-size:14.7px;line-height:18px;color:#1e1e1e;transform:scaleX(0.9910);">insert_data.sql</span>
<svg style="position:absolute;left:1562px;top:343px;" width="17" height="19" viewBox="0 0 17 19"><path d="M1.6 4.6 V14.4 C1.6 16.4 4.6 17.6 8.5 17.6 C12.4 17.6 15.4 16.4 15.4 14.4 V4.6 C15.4 2.6 12.4 1.4 8.5 1.4 C4.6 1.4 1.6 2.6 1.6 4.6 Z" fill="#fff" stroke="#fff" stroke-width="2.2" opacity="0.85"/><path d="M1.6 4.6 V14.4 C1.6 16.4 4.6 17.6 8.5 17.6 C12.4 17.6 15.4 16.4 15.4 14.4 V4.6 C15.4 2.6 12.4 1.4 8.5 1.4 C4.6 1.4 1.6 2.6 1.6 4.6 Z" fill="#3b3b3b"/><ellipse cx="8.5" cy="4.9" rx="5.9" ry="2.6" fill="#F4F4F4"/></svg>
<span class="t" style="left:1586.90px;top:366.70px;font-size:14.7px;line-height:18px;color:#1e1e1e;transform:scaleX(1.0021);">stored_procedure.sql</span>
<svg style="position:absolute;left:1562px;top:365px;" width="17" height="19" viewBox="0 0 17 19"><path d="M1.6 4.6 V14.4 C1.6 16.4 4.6 17.6 8.5 17.6 C12.4 17.6 15.4 16.4 15.4 14.4 V4.6 C15.4 2.6 12.4 1.4 8.5 1.4 C4.6 1.4 1.6 2.6 1.6 4.6 Z" fill="#fff" stroke="#fff" stroke-width="2.2" opacity="0.85"/><path d="M1.6 4.6 V14.4 C1.6 16.4 4.6 17.6 8.5 17.6 C12.4 17.6 15.4 16.4 15.4 14.4 V4.6 C15.4 2.6 12.4 1.4 8.5 1.4 C4.6 1.4 1.6 2.6 1.6 4.6 Z" fill="#3b3b3b"/><ellipse cx="8.5" cy="4.9" rx="5.9" ry="2.6" fill="#F4F4F4"/></svg>
<span class="t" style="left:1586.90px;top:389.20px;font-size:14.7px;line-height:18px;color:#1e1e1e;transform:scaleX(1.0524);">trigger.sql</span>
<svg style="position:absolute;left:1562px;top:388px;" width="17" height="19" viewBox="0 0 17 19"><path d="M1.6 4.6 V14.4 C1.6 16.4 4.6 17.6 8.5 17.6 C12.4 17.6 15.4 16.4 15.4 14.4 V4.6 C15.4 2.6 12.4 1.4 8.5 1.4 C4.6 1.4 1.6 2.6 1.6 4.6 Z" fill="#fff" stroke="#fff" stroke-width="2.2" opacity="0.85"/><path d="M1.6 4.6 V14.4 C1.6 16.4 4.6 17.6 8.5 17.6 C12.4 17.6 15.4 16.4 15.4 14.4 V4.6 C15.4 2.6 12.4 1.4 8.5 1.4 C4.6 1.4 1.6 2.6 1.6 4.6 Z" fill="#3b3b3b"/><ellipse cx="8.5" cy="4.9" rx="5.9" ry="2.6" fill="#F4F4F4"/></svg>
<span class="t" style="left:1586.90px;top:411.70px;font-size:14.7px;line-height:18px;color:#1e1e1e;transform:scaleX(1.0111);">view.sql</span>
<svg style="position:absolute;left:1562px;top:410px;" width="17" height="19" viewBox="0 0 17 19"><path d="M1.6 4.6 V14.4 C1.6 16.4 4.6 17.6 8.5 17.6 C12.4 17.6 15.4 16.4 15.4 14.4 V4.6 C15.4 2.6 12.4 1.4 8.5 1.4 C4.6 1.4 1.6 2.6 1.6 4.6 Z" fill="#fff" stroke="#fff" stroke-width="2.2" opacity="0.85"/><path d="M1.6 4.6 V14.4 C1.6 16.4 4.6 17.6 8.5 17.6 C12.4 17.6 15.4 16.4 15.4 14.4 V4.6 C15.4 2.6 12.4 1.4 8.5 1.4 C4.6 1.4 1.6 2.6 1.6 4.6 Z" fill="#3b3b3b"/><ellipse cx="8.5" cy="4.9" rx="5.9" ry="2.6" fill="#F4F4F4"/></svg>
<div style="position:absolute;left:1503px;top:971px;width:408px;height:21px;background:#E8E8EC;"></div>
<div style="position:absolute;left:1524px;top:976px;width:287px;height:11px;background:#C2C3C9;"></div>
<svg style="position:absolute;left:1509px;top:975px;" width="8" height="12" viewBox="0 0 8 12"><path d="M7 1 L1 6 L7 11 Z" fill="#868999"/></svg>
<svg style="position:absolute;left:1896px;top:975px;" width="8" height="12" viewBox="0 0 8 12"><path d="M1 1 L7 6 L1 11 Z" fill="#868999"/></svg>
<!-- gen_bottom -->
<div style="position:absolute;left:0px;top:1000px;width:1920px;height:30px;background:#007ACC;"></div>
<svg style="position:absolute;left:4px;top:1008px;" width="22" height="15" viewBox="0 0 22 15"><path d="M5.5 1.5 H20.5 L17 13.5 H1.5 Z" fill="none" stroke="#ffffff" stroke-width="1.5"/></svg>
<span class="t" style="left:34.52px;top:1007.00px;font-size:14.7px;line-height:18px;color:#ffffff;transform:scaleX(0.9768);">Ready</span>
<span class="t" style="left:1084.23px;top:1007.00px;font-size:14.7px;line-height:18px;color:#ffffff;transform:scaleX(1.0349);">Col 1</span>
<span class="t" style="left:1198.29px;top:1007.00px;font-size:14.7px;line-height:18px;color:#ffffff;transform:scaleX(0.9565);">Ch 1</span>
<span class="t" style="left:1367.91px;top:1007.00px;font-size:14.7px;line-height:18px;color:#ffffff;transform:scaleX(1.0234);">INS</span>
<div style="position:absolute;left:0px;top:1030px;width:1920px;height:50px;background:linear-gradient(90deg,#2C2326 0%,#2A2224 55%,#1F1B1D 75%,#1E1A1C 100%);"></div>
<div style="position:absolute;left:0px;top:1030px;width:60px;height:50px;background:#1F1F25;"></div>
<div style="position:absolute;left:60px;top:1030px;width:360px;height:50px;background:#6b6b6b;"></div>
<div style="position:absolute;left:61px;top:1031px;width:358px;height:49px;background:#3E3E3E;"></div>
<svg style="position:absolute;left:20px;top:1045px;" width="20" height="20" viewBox="0 0 20 20"><path d="M0 2.9 L8.6 1.7 V9.5 H0 Z M9.6 1.55 L20 0 V9.5 H9.6 Z M0 10.5 H8.6 V18.3 L0 17.1 Z M9.6 10.5 H20 V20 L9.6 18.45 Z" fill="#ffffff"/></svg>
<svg style="position:absolute;left:74px;top:1045px;" width="22" height="22" viewBox="0 0 22 22"><circle cx="13" cy="8.5" r="6.3" fill="none" stroke="#f0f0f0" stroke-width="1.6"/><path d="M8.6 13 L1.5 20.5" stroke="#f0f0f0" stroke-width="1.8"/></svg>
<span class="t" style="left:110.28px;top:1044.90px;font-size:18.5px;line-height:22px;color:#ececec;transform:scaleX(1.0044);">Type here to search</span>
<svg style="position:absolute;left:438px;top:1043px;" width="24" height="23" viewBox="0 0 24 23"><g transform="translate(-438,-1043)" fill="none" stroke="#ffffff" stroke-width="1.4"><path d="M440.4 1048.2 V1045.9 H451.8 V1048.2"/><rect x="440.4" y="1050.6" width="11.4" height="8.6"/><path d="M440.4 1061.2 V1063.4 H451.8 V1061.2"/><path d="M458.4 1044.6 V1050.4 M458.4 1054.6 V1064.4"/><rect x="457.2" y="1051" width="2.4" height="3" fill="#ffffff" stroke-width="0.8"/></g></svg>
<!-- gen_task -->
<div style="position:absolute;left:1042px;top:1030px;width:61px;height:47px;background:#595350;"></div>
<div style="position:absolute;left:737px;top:1077px;width:51px;height:3px;background:#76B9ED;"></div>
<div style="position:absolute;left:799px;top:1077px;width:40px;height:3px;background:#76B9ED;"></div>
<div style="position:absolute;left:861px;top:1077px;width:51px;height:3px;background:#76B9ED;"></div>
<div style="position:absolute;left:923px;top:1077px;width:51px;height:3px;background:#76B9ED;"></div>
<div style="position:absolute;left:1042px;top:1077px;width:61px;height:3px;background:#76B9ED;"></div>
<div style="position:absolute;left:839px;top:1077px;width:1px;height:3px;background:#2B2326;"></div>
<div style="position:absolute;left:840px;top:1077px;width:10px;height:3px;background:#5F8FBB;"></div>
<svg style="position:absolute;left:498px;top:1040px;" width="32" height="30" viewBox="0 0 32 30"><defs><linearGradient id="ol1" x1="0" y1="0" x2="1" y2="1"><stop offset="0" stop-color="#1F8DE3"/><stop offset="1" stop-color="#0A63C2"/></linearGradient></defs>
<rect x="9" y="1" width="20" height="20" rx="1.5" fill="#1C86DC"/><rect x="19" y="3" width="9" height="8" fill="#3DB4F2"/><rect x="10" y="3" width="9" height="8" fill="#1370C8"/><rect x="19" y="11" width="9" height="8" fill="#1F8FE5"/>
<path d="M14 15 L31 15 V27 Q31 29 29 29 H12 Q10 29 10 27 Z" fill="#1468C4"/><path d="M18 29 L31 17 V27 Q31 29 29 29 Z" fill="#2C9BEA"/><path d="M10 20 L26 29 H12 Q10 29 10 27 Z" fill="#1B7ED8"/>
<rect x="1" y="7" width="17" height="16" rx="1.6" fill="url(#ol1)"/><ellipse cx="9.5" cy="15" rx="4" ry="4.6" fill="none" stroke="#fff" stroke-width="2"/></svg>
<svg style="position:absolute;left:562px;top:1040px;" width="28" height="30" viewBox="0 0 28 30"><defs><linearGradient id="mc1" x1="0" y1="0" x2="1" y2="1"><stop offset="0" stop-color="#9B6BDA"/><stop offset="0.5" stop-color="#4B79D8"/><stop offset="1" stop-color="#2CA7E8"/></linearGradient><linearGradient id="mc2" x1="0" y1="1" x2="1" y2="0"><stop offset="0" stop-color="#3C8FE0"/><stop offset="1" stop-color="#A070DC"/></linearGradient></defs>
<path d="M14 1 L25.5 7 Q27 8 27 10 V20 Q27 22 25.5 23 L14 29 L2.5 23 Q1 22 1 20 V10 Q1 8 2.5 7 Z" fill="url(#mc1)"/>
<path d="M14 1 L2.5 7 Q1 8 1 10 V20 L9 15 V11 L14 8.5 Z" fill="#9A6FDB"/>
<path d="M27 10 V20 Q27 22 25.5 23 L14 29 L9.5 26 L19 19 V11 Z" fill="url(#mc2)"/>
<path d="M14 29 L2.5 23 Q1 22 1 20 L9 15 V19 L19 19 Z" fill="#3F86DD"/>
<path d="M14 9.5 L19 12.3 V17.7 L14 20.5 L9 17.7 V12.3 Z" fill="#2B2326"/></svg>
<svg style="position:absolute;left:622px;top:1040px;" width="32" height="30" viewBox="0 0 32 30"><path d="M1 11 L16 1.5 L31 11 Z" fill="#0F66B8"/><rect x="1" y="11" width="30" height="17.5" fill="#36A9F0"/><path d="M5 11 H27 V19 L16 24 L5 19 Z" fill="#F4F6F8"/><path d="M1 11 L16 21.5 L31 11 V28.5 H1 Z" fill="#2F9FEA"/><path d="M1 28.5 L14 19.5 L16 21.3 L18 19.5 L31 28.5 Z" fill="#1C88DC"/></svg>
<svg style="position:absolute;left:684px;top:1040px;" width="31" height="31" viewBox="0 0 31 31"><defs><linearGradient id="st1" x1="0" y1="0" x2="0" y2="1"><stop offset="0" stop-color="#FFFFFF"/><stop offset="1" stop-color="#DCDCDC"/></linearGradient></defs>
<path d="M8.5 8 V3.5 Q8.5 2 10 2 H21 Q22.5 2 22.5 3.5 V8" fill="none" stroke="#2D9BE8" stroke-width="2"/>
<path d="M1 7 H30 V26 Q30 30 26 30 H5 Q1 30 1 26 Z" fill="url(#st1)"/>
<rect x="10" y="13" width="5" height="5" fill="#F25022"/><rect x="16" y="13" width="5" height="5" fill="#7FBA00"/><rect x="10" y="19" width="5" height="5" fill="#00A4EF"/><rect x="16" y="19" width="5" height="5" fill="#FFB900"/></svg>
<svg style="position:absolute;left:746px;top:1040px;" width="32" height="31" viewBox="0 0 32 31"><defs><linearGradient id="ed1" x1="0" y1="0" x2="1" y2="0.3"><stop offset="0" stop-color="#2BA0E6"/><stop offset="0.6" stop-color="#35C1B5"/><stop offset="1" stop-color="#5FD05A"/></linearGradient><linearGradient id="ed2" x1="0" y1="0" x2="0.6" y2="1"><stop offset="0" stop-color="#1B72C8"/><stop offset="1" stop-color="#0C4FA3"/></linearGradient></defs>
<path d="M2 14 C2 6 9 1 16 1 C25 1 31 7.5 31 14 C31 19 27 22 23 22 C19.5 22 18 20.5 18 19 C18 17.5 19.5 17 19.5 15 C19.5 12 16.5 9.5 13 9.5 C8 9.5 3 12 2 17 Z" fill="url(#ed1)"/>
<path d="M2 15 C2 23 8 30 17 30 C22 30 26.5 27.5 28.5 24.5 C26 26 22.5 26.5 19.5 25.5 C13.5 23.5 11 18 13 13.5 C13.5 12 14.5 10.5 16 9.8 C9 8 2 10 2 15 Z" fill="url(#ed2)"/>
<circle cx="9" cy="24" r="6.8" fill="#BFBFBF"/><circle cx="9" cy="21.8" r="2.5" fill="#F2F2F2"/><path d="M4.2 27.8 C4.5 24.8 13.5 24.8 13.8 27.8 C12.5 30 5.5 30 4.2 27.8 Z" fill="#F2F2F2"/></svg>
<svg style="position:absolute;left:809px;top:1042px;" width="30" height="28" viewBox="0 0 30 28"><path d="M1 3 Q1 1.5 2.5 1.5 H11 L13.5 4 H27.5 Q29 4 29 5.5 V9 H1 Z" fill="#E9A52B"/><rect x="1" y="6.5" width="28" height="19" rx="1.3" fill="#FBD768"/><path d="M1 14 H29 V24 Q29 25.5 27.5 25.5 H2.5 Q1 25.5 1 24 Z" fill="#F9C748"/><path d="M7 25.5 V17.5 Q7 16 8.5 16 H21.5 Q23 16 23 17.5 V25.5 H19.5 V20 H10.5 V25.5 Z" fill="#2F8FE0"/></svg>
<svg style="position:absolute;left:871px;top:1040px;" width="30" height="31" viewBox="0 0 30 31"><defs><radialGradient id="ff1" cx="0.7" cy="0.15" r="1"><stop offset="0" stop-color="#FFE347"/><stop offset="0.35" stop-color="#FF9A2A"/><stop offset="0.75" stop-color="#F5342F"/><stop offset="1" stop-color="#E0225A"/></radialGradient></defs>
<path d="M15 4 C18 3 20 1.5 20.5 0.5 C24 3 25 6 25 8.5 C27.5 10 29 14 29 17 C29 24.5 23 30.5 15 30.5 C7 30.5 1 24.5 1 17 C1 13 2 10 3.5 8.5 C3.5 10 4 11.5 5 12.5 C5 9.5 6.5 7 9 5 C8.5 7 9.5 8.5 11 9.5 C12 7 13 5 15 4 Z" fill="url(#ff1)"/>
<circle cx="14" cy="17.5" r="6.2" fill="#7A45D8"/><circle cx="13" cy="16.5" r="3.6" fill="#9A5CF0"/>
<path d="M8 12 C10 10.5 12.5 10.8 14 12.5 C12 12.5 10.5 14 10.8 16 C8.5 15.5 7.5 13.5 8 12 Z" fill="#FF9A2A"/>
<path d="M3.5 8.5 C5.5 5.5 9.5 4 12.5 6.5 C9.5 6.5 7.5 8.5 7.5 11 C6 10.5 4.5 9.8 3.5 8.5 Z" fill="#FFB83A"/></svg>
<svg style="position:absolute;left:933px;top:1041px;" width="31" height="30" viewBox="0 0 31 30"><path d="M22 1 L29.5 4.5 V25.5 L22 29 L8 16.5 L3.5 20 L1 18.7 V11.3 L3.5 10 L8 13.5 Z" fill="#2A8FE0"/><path d="M22 1 L29.5 4.5 V25.5 L22 29 Z" fill="#35B0F2"/><path d="M22 8.5 V21.5 L13.5 15 Z" fill="#2B2326"/><path d="M1 11.3 L3.5 10 L22 25 V29 L1 18.7 L3.5 20 L8 16.5 Z" fill="#1B74C8" opacity="0.55"/></svg>
<svg style="position:absolute;left:994px;top:1041px;" width="32" height="30" viewBox="0 0 32 30"><path d="M22.5 1 L31 4.5 V25.5 L22.5 29 L8 17 L3.5 20.5 L1 19.3 V10.7 L3.5 9.5 L8 13 Z" fill="#8E5BD0"/><path d="M22.5 1 L31 4.5 V25.5 L22.5 29 Z" fill="#B78BF0"/><path d="M22.5 8.8 V21.2 L14.5 15 Z" fill="#2B2326"/><path d="M1 10.7 L3.5 9.5 L22.5 25.5 V29 L1 19.3 Z" fill="#6A3BB2" opacity="0.6"/><path d="M4 12.3 V17.7 L6.8 15 Z" fill="#2B2326"/></svg>
<svg style="position:absolute;left:1058px;top:1040.4px;" width="28.7" height="28.7" viewBox="0 0 24.3 24.3"><path d="M2.4 2.6 V14.4 C2.4 15.9 5.4 17.1 9.1 17.1 C12.8 17.1 15.9 15.9 15.9 14.4 V2.6 Z" fill="#F9DE6E"/>
<path d="M9.1 5 V17.1 C12.8 17.1 15.9 15.9 15.9 14.4 V2.6 C15.9 4 12.8 5 9.1 5 Z" fill="#F5B731"/>
<path d="M6.5 4.9 L7.6 8.5 L6.6 11 L8 13.5 L7 17 L9.1 17.1 V5 Z" fill="#F5B731" opacity="0.8"/>
<ellipse cx="9.15" cy="2.6" rx="6.75" ry="2.5" fill="#F8B85A"/>
<path d="M17.6 1.1 H23.4 V6.9" fill="none" stroke="#3DAA3D" stroke-width="1.7"/>
<path d="M0.9 17.6 V23.4 H6.9" fill="none" stroke="#3DAA3D" stroke-width="1.7"/>
<path d="M12.6 13.6 L20.4 22.4" stroke="#E8912A" stroke-width="1.9" stroke-linecap="round"/>
<path d="M22 12.4 L12.2 22.4" stroke="#E8912A" stroke-width="1.9" stroke-linecap="round"/>
<path d="M9.6 13.6 L12.6 11 L14.9 13.2 L14 14.4 L13 13.8 L11.2 15.6 Z" fill="#E8912A"/>
<path d="M19.6 11.2 C21 10.2 22.6 10.4 23.6 11.4 L21.8 12.6 L22.4 13.8 L24 13 C24.2 14.6 23 16 21.4 16 C19.6 16 18.4 13 19.6 11.2 Z" fill="#E8912A"/></svg>
<!-- gen_tray -->
<svg style="position:absolute;left:1394px;top:1043px;" width="32" height="27" viewBox="0 0 32 27"><defs><linearGradient id="cl1" x1="0" y1="0" x2="0" y2="1"><stop offset="0" stop-color="#F4F8FE"/><stop offset="0.55" stop-color="#BFD6F2"/><stop offset="1" stop-color="#8DB4E6"/></linearGradient><radialGradient id="sn1" cx="0.4" cy="0.4" r="0.7"><stop offset="0" stop-color="#FFC83A"/><stop offset="1" stop-color="#F08A1C"/></radialGradient></defs>
<circle cx="22.5" cy="8.5" r="7.6" fill="url(#sn1)"/>
<path d="M7 25.5 C2.5 25.5 0.8 22.5 0.8 20 C0.8 17 3 14.8 6 14.6 C7 10 10.5 7.2 14.8 7.2 C18.8 7.2 21.8 9.6 23 13 C27.5 12.6 31 15.5 31 19.5 C31 23 28.5 25.5 25 25.5 Z" fill="url(#cl1)"/></svg>
<span class="t" style="left:1435.74px;top:1045.40px;font-size:16.3px;line-height:20px;color:#f2f2f2;transform:scaleX(1.0186);">19°C</span>
<svg style="position:absolute;left:1483px;top:1046px;" width="68" height="22" viewBox="0 0 68 22"><g fill="none" stroke="#f2f2f2" stroke-width="1.45" stroke-linecap="round" stroke-linejoin="round">
<path d="M66.5 15.2 H60 C58 15.2 57.3 14 58.2 12.4 C59.2 10.6 61.5 9.6 63.6 10 C62 10.3 60.6 11.3 60.4 12.6"/>
<path d="M55.8 3.3 V13.5 C55.8 14.8 55 15.2 53.8 15.2 H48"/>
<path d="M49.3 15.2 C49.3 13 50.3 11.6 51.3 10.4"/>
<path d="M50.8 6.8 C49.6 6.2 48.6 7.4 49.6 8.2 L51.6 8.4 M49.6 8.2 L48.6 9"/>
<path d="M48 15.2 H42 C39 15.2 38.3 12 41 11.4 C43 11 44 13 42.6 15.2 M38.8 14.6 C37.6 16 37.3 18 37.5 20.5"/>
<path d="M31.5 15.2 H26 C24 15.2 23.3 14 24.2 12.4 C25.2 10.6 27.5 9.6 29.6 10 C28 10.3 26.6 11.3 26.4 12.6"/>
<path d="M21.8 3.3 V13.5 C21.8 14.8 21 15.2 19.8 15.2 H4"/>
<path d="M16.3 3.3 V15.2"/>
<path d="M11.5 15.2 V12"/>
<path d="M4.2 3.3 V15.2"/>
<path d="M6 2.4 L8.2 1.6 M6 4.2 L8.2 3.4"/>
</g>
<circle cx="61.6" cy="5.6" r="1.05" fill="#f2f2f2"/><circle cx="27.6" cy="5.6" r="1.05" fill="#f2f2f2"/><circle cx="11.6" cy="19" r="1.05" fill="#f2f2f2"/></svg>
<svg style="position:absolute;left:1581px;top:1049px;" width="18" height="12" viewBox="0 0 18 12"><path d="M1.5 10 L9 2 L16.5 10" fill="none" stroke="#f2f2f2" stroke-width="1.5"/></svg>
<svg style="position:absolute;left:1612px;top:1044px;" width="18" height="22" viewBox="0 0 18 22"><rect x="2.2" y="7" width="9.5" height="8.6" rx="2" fill="none" stroke="#f2f2f2" stroke-width="1.4"/><path d="M11.7 10 L15.8 7.8 V14.8 L11.7 12.6" fill="none" stroke="#f2f2f2" stroke-width="1.3"/><path d="M3.5 3.2 C6.5 1.2 10.5 1.2 13.5 3.2 M3.5 19.4 C6.5 21.3 10.5 21.3 13.5 19.4" fill="none" stroke="#f2f2f2" stroke-width="1.3"/></svg>
<svg style="position:absolute;left:1640px;top:1049px;" width="22" height="14" viewBox="0 0 22 14"><rect x="1.2" y="1.8" width="17" height="10" fill="none" stroke="#f2f2f2" stroke-width="1.4"/><rect x="3.4" y="4" width="9.6" height="5.6" fill="#f2f2f2"/><rect x="18.6" y="5" width="1.6" height="3.6" fill="#f2f2f2"/></svg>
<svg style="position:absolute;left:1669px;top:1045px;" width="23" height="20" viewBox="0 0 23 20"><path d="M1.5 7 H4.5 L8.5 3 V17 L4.5 13 H1.5 Z" fill="none" stroke="#f2f2f2" stroke-width="1.3" stroke-linejoin="round"/><path d="M11 7.8 C12 9 12 11 11 12.2 M13.8 5.6 C15.8 8 15.8 12 13.8 14.4" fill="none" stroke="#f2f2f2" stroke-width="1.3"/><path d="M17 2 C20.8 6 20.8 14 17 18" fill="none" stroke="#8a8a8a" stroke-width="1.2"/></svg>
<svg style="position:absolute;left:1702px;top:1047px;" width="18" height="18" viewBox="0 0 18 18"><circle cx="14.2" cy="14.8" r="1.5" fill="#f2f2f2"/><path d="M9.2 15.5 C9.2 12.5 11.2 10.4 14.2 10.2 M5.2 15.5 C5.4 10.5 9 6.6 14.6 6.3" fill="none" stroke="#f2f2f2" stroke-width="1.4"/><path d="M1.2 15.5 C1.6 8 7 2.4 15 2.2" fill="none" stroke="#b8b8b8" stroke-width="1.4"/></svg>
<span class="t" style="left:1732.57px;top:1046.60px;font-size:14.7px;line-height:18px;color:#f2f2f2;transform:scaleX(0.9340);">ENG</span>
<span class="t" style="left:1785.97px;top:1035.00px;font-size:14.7px;line-height:18px;color:#f2f2f2;transform:scaleX(0.9624);">7:13 PM</span>
<span class="t" style="left:1781.51px;top:1058.00px;font-size:14.7px;line-height:18px;color:#f2f2f2;transform:scaleX(1.0633);">2/2/2024</span>
<svg style="position:absolute;left:1868px;top:1044px;" width="22" height="22" viewBox="0 0 22 22"><path d="M1.7 1.7 H20.3 V17 H13.5 L11 19.8 L8.5 17 H1.7 Z" fill="none" stroke="#f2f2f2" stroke-width="1.4"/></svg>
<div style="position:absolute;left:1915px;top:1030px;width:1px;height:50px;background:#6e6e6e;"></div>
<!-- gen_icons -->
<svg style="position:absolute;left:14px;top:70px;" width="8" height="24" viewBox="0 0 8 24"><rect x="0" y="0.00" width="1.3" height="1.3" fill="#5F6B86"/><rect x="4.8" y="0.00" width="1.3" height="1.3" fill="#5F6B86"/><rect x="0" y="5.05" width="1.3" height="1.3" fill="#5F6B86"/><rect x="4.8" y="5.05" width="1.3" height="1.3" fill="#5F6B86"/><rect x="0" y="10.10" width="1.3" height="1.3" fill="#5F6B86"/><rect x="4.8" y="10.10" width="1.3" height="1.3" fill="#5F6B86"/><rect x="0" y="15.15" width="1.3" height="1.3" fill="#5F6B86"/><rect x="4.8" y="15.15" width="1.3" height="1.3" fill="#5F6B86"/><rect x="0" y="20.20" width="1.3" height="1.3" fill="#5F6B86"/><rect x="4.8" y="20.20" width="1.3" height="1.3" fill="#5F6B86"/><rect x="2.5" y="2.60" width="1.3" height="1.3" fill="#8793B2"/><rect x="2.5" y="7.65" width="1.3" height="1.3" fill="#8793B2"/><rect x="2.5" y="12.70" width="1.3" height="1.3" fill="#8793B2"/><rect x="2.5" y="17.75" width="1.3" height="1.3" fill="#8793B2"/></svg>
<svg style="position:absolute;left:29.4px;top:71.5px;" width="17" height="17" viewBox="0 0 17 17"><circle cx="8.5" cy="8.5" r="7.15" fill="#B4B8C0"/><path d="M12.3 8.5 H6 M8.6 4.6 L4.7 8.5 L8.6 12.4" fill="none" stroke="#DDE1EA" stroke-width="2.4"/></svg>
<svg style="position:absolute;left:54px;top:79px;" width="8" height="5" viewBox="0 0 8 5"><path d="M0 0 H8 L4 4.5 Z" fill="#8e929c"/></svg>
<svg style="position:absolute;left:70.6px;top:72.4px;" width="17" height="17" viewBox="0 0 17 17"><circle cx="8.5" cy="8.5" r="7.15" fill="#B4B8C0"/><path d="M4.7 8.5 H11 M8.4 4.6 L12.3 8.5 L8.4 12.4" fill="none" stroke="#DDE1EA" stroke-width="2.4"/></svg>
<div style="position:absolute;left:97px;top:68px;width:1px;height:25px;background:#7887A8;"></div>
<svg style="position:absolute;left:105px;top:70px;" width="24" height="22" viewBox="0 0 24 22"><g transform="translate(-105,-70)"><path d="M118.3 72.6 H121.6 L124.7 75.8 V79.6" fill="none" stroke="#424242" stroke-width="1.5"/><path d="M121.2 72.4 L124.9 76.2 H121.2 Z" fill="#424242"/><path d="M111.6 80.4 C110.2 80.8 110 81.6 110 82.6 V84.6 C110 85.8 110.4 86.4 111.6 86.8" fill="none" stroke="#424242" stroke-width="1.4"/><rect x="113" y="78.6" width="10.2" height="9.4" rx="1.8" fill="#DDE1EA" stroke="#424242" stroke-width="1.5"/><path d="M112.4 71.6 V79.6 M108.3 75.6 H116.5 M109.5 72.7 L115.3 78.5 M115.3 72.7 L109.5 78.5" stroke="#E8861A" stroke-width="1.15"/></g></svg>
<svg style="position:absolute;left:134px;top:79px;" width="8" height="5" viewBox="0 0 8 5"><path d="M0 0 H8 L4 4.5 Z" fill="#1e2a4a"/></svg>
<svg style="position:absolute;left:148px;top:70px;" width="22" height="22" viewBox="0 0 22 22"><g transform="translate(-148,-70)"><rect x="156.3" y="77.1" width="10.5" height="10.5" fill="#DDE1EA" stroke="#B3B7C0" stroke-width="1.8" stroke-dasharray="3.2 0.8"/><path d="M154.5 71.8 V79.6 M150.5 75.7 H158.5 M151.7 72.9 L157.3 78.5 M157.3 72.9 L151.7 78.5" stroke="#BDC1CA" stroke-width="1.05"/></g></svg>
<svg style="position:absolute;left:176px;top:79px;" width="8" height="5" viewBox="0 0 8 5"><path d="M0 0 H8 L4 4.5 Z" fill="#8e929c"/></svg>
<svg style="position:absolute;left:189px;top:70px;" width="24" height="22" viewBox="0 0 24 22"><g transform="translate(-189,-70)"><path d="M199.5 76 H208.4 V89 H199.5 Z" fill="#DDE1EA" stroke="#E2BC7E" stroke-width="1"/><path d="M192 82.4 H203.6 L208.9 89.4 H193 Z" fill="#D9A457"/><path d="M192.6 79.4 C191.8 76 194.5 74.6 198.4 75" fill="none" stroke="#1A56B0" stroke-width="1.7"/><path d="M196.4 72.3 L199.6 75 L196.6 78" fill="none" stroke="#1A56B0" stroke-width="1.7"/></g></svg>
<svg style="position:absolute;left:219px;top:72.3px;" width="17" height="17" viewBox="0 0 17 17"><path d="M0.5 0.5 H13.5 L16.5 3.5 V16.5 H0.5 Z" fill="#0F4A94"/><rect x="4" y="0.5" width="8" height="5.5" fill="#CFD6E5"/><rect x="8.6" y="1.3" width="2.2" height="3.6" fill="#0F4A94"/><rect x="3.2" y="10" width="10.5" height="6.5" fill="#0F4A94"/></svg>
<svg style="position:absolute;left:245px;top:71px;" width="19" height="20" viewBox="0 0 19 20"><path d="M7.5 0.5 H16 L18.5 3 V11.5 H7.5 Z" fill="#0F4A94"/><rect x="10" y="0.5" width="5" height="3.6" fill="#CFD6E5"/><rect x="12.8" y="1" width="1.5" height="2.4" fill="#0F4A94"/><path d="M0.5 8.5 H9.5 L12 11 V19.5 H0.5 Z" fill="#0F4A94" stroke="#CFD6E5" stroke-width="1"/><rect x="3" y="8.8" width="5" height="3.4" fill="#CFD6E5"/><rect x="5.8" y="9.2" width="1.5" height="2.4" fill="#0F4A94"/></svg>
<div style="position:absolute;left:272px;top:68px;width:1px;height:25px;background:#7887A8;"></div>
<svg style="position:absolute;left:281.7px;top:71.8px;" width="19" height="19" viewBox="0 0 19 19"><path d="M5.5 1 H13 L17.5 5.5 V15.5 H9" fill="#F5F6FA" stroke="#3f3f3f" stroke-width="1.3"/><path d="M13.3 1 L17.5 5.3 H13.3 Z" fill="#3f3f3f"/><path d="M8 5.5 H11.5" stroke="#3f3f3f" stroke-width="1.2"/><path d="M8 8.2 H15 M8 10.8 H15 M10 13.2 H15" stroke="#8a8a8a" stroke-width="1.3"/><path d="M0.8 12 V16.2 C0.8 17.4 2.4 18.3 4.5 18.3 C6.6 18.3 8.2 17.4 8.2 16.2 V12 Z" fill="#3a3a3a"/><ellipse cx="4.5" cy="12" rx="3.7" ry="1.9" fill="#E4E4E4" stroke="#3a3a3a" stroke-width="1"/></svg>
<span class="t" style="left:306.80px;top:73.00px;font-size:14.7px;line-height:18px;color:#1e2a4a;transform:scaleX(0.9946);">New Query</span>
<svg style="position:absolute;left:392.7px;top:71.8px;" width="19" height="19" viewBox="0 0 19 19"><path d="M5.5 1 H13 L17.5 5.5 V15.5 H9" fill="#F5F6FA" stroke="#3f3f3f" stroke-width="1.3"/><path d="M13.3 1 L17.5 5.3 H13.3 Z" fill="#3f3f3f"/><path d="M8 5.5 H11.5" stroke="#3f3f3f" stroke-width="1.2"/><path d="M8 8.2 H15 M8 10.8 H15 M10 13.2 H15" stroke="#8a8a8a" stroke-width="1.3"/><path d="M0.8 12 V16.2 C0.8 17.4 2.4 18.3 4.5 18.3 C6.6 18.3 8.2 17.4 8.2 16.2 V12 Z" fill="#3a3a3a"/><ellipse cx="4.5" cy="12" rx="3.7" ry="1.9" fill="#E4E4E4" stroke="#3a3a3a" stroke-width="1"/></svg>
<svg style="position:absolute;left:420px;top:71px;" width="22" height="20" viewBox="0 0 22 20"><path d="M10.5 1.6 L17.5 5.9 L10.5 9.8 L3.3 5.9 Z" fill="#DCDFE8" stroke="#3a3a3a" stroke-width="1.15" stroke-linejoin="round"/><path d="M3.3 5.9 V11.2 M10.5 9.8 V11.5 M17.5 5.9 V14.3 L16 15" fill="none" stroke="#3a3a3a" stroke-width="1.15"/><path transform="translate(0.40,12.6) scale(0.975,0.96)" d="M0 6 V0 L2 3.4 L4 0 V6" fill="none" stroke="#333" stroke-width="1.3" vector-effect="non-scaling-stroke" stroke-linejoin="miter"/><path transform="translate(5.80,12.6) scale(0.975,0.96)" d="M0 0 V6 H1.5 C3.5 6 4 4.6 4 3 C4 1.4 3.5 0 1.5 0 H0" fill="none" stroke="#333" stroke-width="1.3" vector-effect="non-scaling-stroke" stroke-linejoin="miter"/><path transform="translate(11.20,12.6) scale(0.975,0.96)" d="M0 0 L4 6 M4 0 L0 6" fill="none" stroke="#333" stroke-width="1.3" vector-effect="non-scaling-stroke" stroke-linejoin="miter"/></svg>
<svg style="position:absolute;left:447px;top:71px;" width="22" height="20" viewBox="0 0 22 20"><path d="M10.5 1.6 L17.5 5.9 L10.5 9.8 L3.3 5.9 Z" fill="#DCDFE8" stroke="#3a3a3a" stroke-width="1.15" stroke-linejoin="round"/><path d="M3.3 5.9 V11.2 M10.5 9.8 V11.5 M17.5 5.9 V14.3 L16 15" fill="none" stroke="#3a3a3a" stroke-width="1.15"/><path transform="translate(0.40,12.6) scale(0.975,0.96)" d="M0 0 V6 H1.5 C3.5 6 4 4.6 4 3 C4 1.4 3.5 0 1.5 0 H0" fill="none" stroke="#333" stroke-width="1.3" vector-effect="non-scaling-stroke" stroke-linejoin="miter"/><path transform="translate(5.80,12.6) scale(0.975,0.96)" d="M0 6 V0 L2 3.4 L4 0 V6" fill="none" stroke="#333" stroke-width="1.3" vector-effect="non-scaling-stroke" stroke-linejoin="miter"/><path transform="translate(11.20,12.6) scale(0.975,0.96)" d="M0 0 L4 6 M4 0 L0 6" fill="none" stroke="#333" stroke-width="1.3" vector-effect="non-scaling-stroke" stroke-linejoin="miter"/></svg>
<svg style="position:absolute;left:474px;top:71px;" width="22" height="20" viewBox="0 0 22 20"><path d="M10.5 1.6 L17.5 5.9 L10.5 9.8 L3.3 5.9 Z" fill="#DCDFE8" stroke="#3a3a3a" stroke-width="1.15" stroke-linejoin="round"/><path d="M3.3 5.9 V11.2 M10.5 9.8 V11.5 M17.5 5.9 V14.3 L16 15" fill="none" stroke="#3a3a3a" stroke-width="1.15"/><path transform="translate(0.40,12.6) scale(0.875,0.96)" d="M0 0 L4 6 M4 0 L0 6" fill="none" stroke="#333" stroke-width="1.3" vector-effect="non-scaling-stroke" stroke-linejoin="miter"/><path transform="translate(5.40,12.6) scale(0.875,0.96)" d="M0 6 V0 L2 3.4 L4 0 V6" fill="none" stroke="#333" stroke-width="1.3" vector-effect="non-scaling-stroke" stroke-linejoin="miter"/><path transform="translate(10.40,12.6) scale(0.875,0.96)" d="M0.3 0 V6 H3.8" fill="none" stroke="#333" stroke-width="1.3" vector-effect="non-scaling-stroke" stroke-linejoin="miter"/><path transform="translate(15.40,12.6) scale(0.875,0.96)" d="M0 6 L2 0 L4 6 M0.9 4.1 H3.1" fill="none" stroke="#333" stroke-width="1.3" vector-effect="non-scaling-stroke" stroke-linejoin="miter"/></svg>
<svg style="position:absolute;left:501px;top:71px;" width="22" height="20" viewBox="0 0 22 20"><path d="M10.5 1.6 L17.5 5.9 L10.5 9.8 L3.3 5.9 Z" fill="#DCDFE8" stroke="#3a3a3a" stroke-width="1.15" stroke-linejoin="round"/><path d="M3.3 5.9 V11.2 M10.5 9.8 V11.5 M17.5 5.9 V14.3 L16 15" fill="none" stroke="#3a3a3a" stroke-width="1.15"/><path transform="translate(0.40,12.6) scale(0.958,0.96)" d="M0 0 V6 H1.5 C3.5 6 4 4.6 4 3 C4 1.4 3.5 0 1.5 0 H0" fill="none" stroke="#333" stroke-width="1.3" vector-effect="non-scaling-stroke" stroke-linejoin="miter"/><path transform="translate(5.73,12.6) scale(0.958,0.96)" d="M0 6 L2 0 L4 6 M0.9 4.1 H3.1" fill="none" stroke="#333" stroke-width="1.3" vector-effect="non-scaling-stroke" stroke-linejoin="miter"/><path transform="translate(11.07,12.6) scale(0.958,0.96)" d="M0 0 L4 6 M4 0 L0 6" fill="none" stroke="#333" stroke-width="1.3" vector-effect="non-scaling-stroke" stroke-linejoin="miter"/></svg>
<div style="position:absolute;left:528px;top:68px;width:1px;height:25px;background:#7887A8;"></div>
<svg style="position:absolute;left:539px;top:72px;" width="16" height="18" viewBox="0 0 16 18"><path d="M4.5 0.8 L10 12 M11.5 0.8 L6 12" stroke="#424242" stroke-width="1.7"/><circle cx="3.6" cy="14" r="2.7" fill="none" stroke="#424242" stroke-width="1.5"/><circle cx="12.4" cy="14" r="2.7" fill="none" stroke="#424242" stroke-width="1.5"/></svg>
<svg style="position:absolute;left:564px;top:70px;" width="20" height="22" viewBox="0 0 20 22"><g transform="translate(-564,-70)"><path d="M571.3 76 V73 H581 V84 H577.5" fill="#E4E7EE" stroke="#4a4a4a" stroke-width="1.4"/><rect x="566.9" y="77" width="9.6" height="11.8" fill="#DDE1EA" stroke="#4a4a4a" stroke-width="1.4"/></g></svg>
<svg style="position:absolute;left:590px;top:70px;" width="20" height="22" viewBox="0 0 20 22"><g transform="translate(-590,-70)"><path d="M598.8 76.5 H596.2 V81.5 M600 88.7 H606.4 V76.5 H604" fill="none" stroke="#4a4a4a" stroke-width="1.4"/><path d="M596.2 76.5 H606.4 V88.7 H596.2 Z" fill="#DDE1EA"/><path d="M598.8 76.5 H596.2 V81.5 M600 88.7 H606.4 V76.5 H604" fill="none" stroke="#4a4a4a" stroke-width="1.4"/><path d="M598.6 77.8 V75.5 H600 C600 72.2 603 72.2 603 75.5 H604.4 V77.8 Z" fill="#DDE1EA" stroke="#4a4a4a" stroke-width="1.2"/><rect x="592.9" y="82.4" width="6.6" height="6.4" fill="#DDE1EA" stroke="#4a4a4a" stroke-width="1.4"/></g></svg>
<div style="position:absolute;left:619px;top:68px;width:1px;height:25px;background:#7887A8;"></div>
<svg style="position:absolute;left:629px;top:70px;" width="17" height="19" viewBox="0 0 17 19"><path d="M2 2 V8.5 H8.5" fill="none" stroke="#B1B5BE" stroke-width="2"/><path d="M2.5 8 C5 3 11 2.5 13.5 6.5 C15.5 10 11 14 6.5 17.5" fill="none" stroke="#B1B5BE" stroke-width="2.2"/></svg>
<svg style="position:absolute;left:658px;top:79px;" width="8" height="5" viewBox="0 0 8 5"><path d="M0 0 H8 L4 4.5 Z" fill="#8e929c"/></svg>
<svg style="position:absolute;left:674px;top:70px;" width="17" height="19" viewBox="0 0 17 19"><path d="M15 2 V8.5 H8.5" fill="none" stroke="#B1B5BE" stroke-width="2"/><path d="M14.5 8 C12 3 6 2.5 3.5 6.5 C1.5 10 6 14 10.5 17.5" fill="none" stroke="#B1B5BE" stroke-width="2.2"/></svg>
<svg style="position:absolute;left:702px;top:79px;" width="8" height="5" viewBox="0 0 8 5"><path d="M0 0 H8 L4 4.5 Z" fill="#8e929c"/></svg>
<div style="position:absolute;left:717px;top:68px;width:1px;height:25px;background:#7887A8;"></div>
<svg style="position:absolute;left:726px;top:71px;" width="20" height="19" viewBox="0 0 20 19"><rect x="1" y="1" width="17.5" height="15" fill="#DDE1EA" stroke="#424242" stroke-width="1.5"/><path d="M2 10 L6 6.5 L10.5 9.5 L17 2.5" fill="none" stroke="#424242" stroke-width="1.4"/><circle cx="5.2" cy="13.8" r="4" fill="#DDE1EA" stroke="#424242" stroke-width="1.4"/><path d="M5.2 13.8 L7.3 11.8" stroke="#424242" stroke-width="1.2"/></svg>
<div style="position:absolute;left:754px;top:68px;width:1px;height:25px;background:#7887A8;"></div>
<svg style="position:absolute;left:762px;top:70px;" width="24" height="22" viewBox="0 0 24 22"><g transform="translate(-762,-70)"><path d="M766.5 74 L768.3 72.2 H773.5 L774.8 73.5 H781.8 V85 H766.5 Z" fill="#DBA858"/><path d="M768.6 72.8 H773.2 L774.5 74.1 H781.2 V75.3 H767.2 Z" fill="#E9C98E"/><circle cx="770.6" cy="83.8" r="2.9" fill="#DDE6F6" stroke="#1A56B0" stroke-width="1.7"/><path d="M768.5 86 L765.6 89" stroke="#1A56B0" stroke-width="2"/></g></svg>
<div style="position:absolute;left:792px;top:68px;width:230px;height:25px;background:#FCFCFD;box-sizing:border-box;border:1px solid #C3CCDD;"></div>
<svg style="position:absolute;left:1008px;top:79px;" width="8" height="5" viewBox="0 0 8 5"><path d="M0 0 H8 L4 4.5 Z" fill="#1e2a4a"/></svg>
<div style="position:absolute;left:1030px;top:68px;width:1px;height:25px;background:#7887A8;"></div>
<svg style="position:absolute;left:1038px;top:70px;" width="22" height="22" viewBox="0 0 22 22"><g transform="translate(-1038,-70)"><path d="M1040.6 74 H1057.4 V86.6 H1051.5 V80 H1040.6 Z" fill="#DDE1EA"/><path d="M1040.6 80.5 V74 M1057.4 74 V86.6 H1051.8" fill="none" stroke="#3f3f3f" stroke-width="1.2"/><rect x="1040" y="72.2" width="18" height="3" fill="#3a3a3a"/><path d="M1040.6 82.8 L1042.8 84.9 L1040.6 87 Z M1042.8 84.9 L1047.8 80.6 L1049.4 81.4 V88.4 L1047.8 89.2 Z" fill="none" stroke="#68217A" stroke-width="1.35" stroke-linejoin="round"/></g></svg>
<svg style="position:absolute;left:1066px;top:71px;" width="20" height="20" viewBox="0 0 20 20"><path d="M3 17 L10.8 9.2" stroke="#3f3f3f" stroke-width="4.3" stroke-linecap="round"/><path d="M18.2 3.8 L15 7 L12.6 4.6 L15.8 1.4 C12.6 0.4 8.8 2.6 8.8 6.2 C8.8 10.2 12.8 12.2 16 10.8 C18.4 9.6 19.4 6.4 18.2 3.8 Z" fill="#3f3f3f"/></svg>
<svg style="position:absolute;left:1094px;top:72px;" width="20" height="16" viewBox="0 0 20 16"><path d="M6.5 4 V1.7 H13.5 V4" fill="none" stroke="#424242" stroke-width="1.6"/><rect x="1" y="4" width="18" height="11.5" fill="#424242"/><rect x="1" y="8.6" width="18" height="1.3" fill="#CFD6E5"/><rect x="4.5" y="7.4" width="2.2" height="3.8" fill="#424242"/><rect x="13.3" y="7.4" width="2.2" height="3.8" fill="#424242"/></svg>
<svg style="position:absolute;left:1120px;top:72px;" width="22" height="16" viewBox="0 0 22 16"><g transform="translate(-1120,-72)"><rect x="1122.8" y="74.6" width="16.4" height="10.8" fill="#DDE1EA" stroke="#3f3f3f" stroke-width="1.4"/><path d="M1125.6 77.2 L1128.6 80 L1125.6 82.8" fill="none" stroke="#3f3f3f" stroke-width="1.3"/></g></svg>
<svg style="position:absolute;left:1148px;top:79px;" width="8" height="5" viewBox="0 0 8 5"><path d="M0 0 H8 L4 4.5 Z" fill="#1e2a4a"/></svg>
<svg style="position:absolute;left:1164px;top:81px;" width="10" height="11" viewBox="0 0 10 11"><path d="M1 2 H9" stroke="#1e2a4a" stroke-width="1.1"/><path d="M1 6.3 H9 L5 10.2 Z" fill="#1e2a4a"/></svg>
<svg style="position:absolute;left:14px;top:101.2px;" width="8" height="24" viewBox="0 0 8 24"><rect x="0" y="0.00" width="1.3" height="1.3" fill="#5F6B86"/><rect x="4.8" y="0.00" width="1.3" height="1.3" fill="#5F6B86"/><rect x="0" y="5.05" width="1.3" height="1.3" fill="#5F6B86"/><rect x="4.8" y="5.05" width="1.3" height="1.3" fill="#5F6B86"/><rect x="0" y="10.10" width="1.3" height="1.3" fill="#5F6B86"/><rect x="4.8" y="10.10" width="1.3" height="1.3" fill="#5F6B86"/><rect x="0" y="15.15" width="1.3" height="1.3" fill="#5F6B86"/><rect x="4.8" y="15.15" width="1.3" height="1.3" fill="#5F6B86"/><rect x="2.5" y="2.60" width="1.3" height="1.3" fill="#8793B2"/><rect x="2.5" y="7.65" width="1.3" height="1.3" fill="#8793B2"/><rect x="2.5" y="12.70" width="1.3" height="1.3" fill="#8793B2"/><rect x="2.5" y="17.75" width="1.3" height="1.3" fill="#8793B2"/></svg>
<svg style="position:absolute;left:32px;top:102.6px;" width="11" height="19" viewBox="0 0 11 19"><path d="M2.4 0 H4.4 V5 H2.4 Z M6.9 0 H8.9 V5 H6.9 Z" fill="#B6BAC5"/><path d="M0 4.8 H9.9 V6.6 H8.9 V10.8 H6.2 V17.3 H3.8 V10.8 H1.1 V6.6 H0 Z" fill="#B6BAC5"/></svg>
<svg style="position:absolute;left:63.2px;top:102.4px;" width="11" height="19" viewBox="0 0 11 19"><path d="M2.4 0 H4.4 V5 H2.4 Z M6.9 0 H8.9 V5 H6.9 Z" fill="#2b2b2b"/><path d="M0 4.8 H9.9 V6.6 H8.9 V10.8 H6.2 V17.3 H3.8 V10.8 H1.1 V6.6 H0 Z" fill="#2b2b2b"/></svg>
<svg style="position:absolute;left:53px;top:100px;" width="16" height="16" viewBox="0 0 16 16"><g transform="translate(-53,-100)"><path d="M57.4 104 L65.4 112" stroke="#0F4A94" stroke-width="3.2"/><path d="M55.2 101.8 L56.6 103.2" stroke="#0F4A94" stroke-width="3.2"/><path d="M65 109.6 L67.2 113.8 L62.8 111.8 Z" fill="#2C6FC4"/></g></svg>
<div style="position:absolute;left:82px;top:99px;width:1px;height:23px;background:#7887A8;"></div>
<div style="position:absolute;left:92px;top:99px;width:200px;height:25px;background:#FDFDFE;box-sizing:border-box;border:1px solid #C3CCDD;"></div>
<span class="t" style="left:95.14px;top:102.70px;font-size:14.7px;line-height:18px;color:#1e1e1e;transform:scaleX(1.0133);">projectExaminationSystem</span>
<svg style="position:absolute;left:278px;top:110px;" width="8" height="5" viewBox="0 0 8 5"><path d="M0 0 H8 L4 4.5 Z" fill="#1e2a4a"/></svg>
<div style="position:absolute;left:300px;top:99px;width:1px;height:23px;background:#7887A8;"></div>
<svg style="position:absolute;left:313px;top:104px;" width="12" height="15" viewBox="0 0 12 15"><path d="M1.5 1.8 V13.2 L9.8 7.5 Z" fill="none" stroke="#2E9B3A" stroke-width="2" stroke-linejoin="miter"/></svg>
<span class="t" style="left:334.84px;top:102.30px;font-size:14.7px;line-height:18px;color:#1e2a4a;transform:scaleX(0.9618);">Execute</span>
<div style="position:absolute;left:403px;top:106px;width:10px;height:10px;background:#A9AEB9;"></div>
<svg style="position:absolute;left:426px;top:102px;" width="18" height="18" viewBox="0 0 18 18"><g transform="translate(-426,-102)"><path d="M428.6 111.2 L430.6 110 L433 114.2 C435 109.5 437.6 106.2 441.6 103.8 C438.6 107.6 436.2 112 434.4 118 H431.8 C431 115.4 430 113.2 428.6 111.2 Z" fill="#222" stroke="#222" stroke-width="1.7" stroke-linejoin="round"/></g></svg>
<svg style="position:absolute;left:452px;top:102px;" width="20" height="19" viewBox="0 0 20 19"><rect x="1" y="1" width="5" height="5" fill="#E6E8F0" stroke="#424242" stroke-width="1.2"/><rect x="12" y="1" width="5" height="5" fill="#E6E8F0" stroke="#424242" stroke-width="1.2"/><rect x="1" y="12" width="5" height="5" fill="#E6E8F0" stroke="#424242" stroke-width="1.2"/><path d="M11.5 3.5 H7 M9 1.8 L7 3.5 L9 5.2 M3.5 11.5 V7.5 M1.8 9.3 L3.5 7.5 L5.2 9.3" fill="none" stroke="#424242" stroke-width="1.2"/><path d="M11 11.5 H18 L14.5 15.5 Z" fill="#E6E8F0" stroke="#424242" stroke-width="1.2"/></svg>
<svg style="position:absolute;left:480px;top:102px;" width="19" height="19" viewBox="0 0 19 19"><path d="M4 5 V1.2 H17.8 V13.5 H14" fill="#DDE1EA" stroke="#424242" stroke-width="1.5"/><path d="M4 2.8 H17.8" stroke="#424242" stroke-width="1.6"/><rect x="1" y="5.3" width="13.3" height="11.5" fill="#DDE1EA" stroke="#424242" stroke-width="1.5"/><path d="M1 7 H14.3" stroke="#424242" stroke-width="1.6"/><path d="M4.5 10.8 H11" stroke="#424242" stroke-width="1.3"/></svg>
<div style="position:absolute;left:503px;top:97px;width:27px;height:28px;background:#FDFBF4;box-sizing:border-box;border:1px solid #3b4a6e;"></div>
<svg style="position:absolute;left:509px;top:101px;" width="15" height="20" viewBox="0 0 15 20"><rect x="1" y="1" width="12.5" height="17.5" fill="#E3E6EE" stroke="#424242" stroke-width="1.5"/><path d="M1 9.8 H13.5" stroke="#424242" stroke-width="1.5"/><path d="M3.5 12.8 H5 M6.5 12.8 H11 M3.5 15.5 H5 M6.5 15.5 H11" stroke="#424242" stroke-width="1.2"/></svg>
<div style="position:absolute;left:534px;top:99px;width:1px;height:23px;background:#7887A8;"></div>
<svg style="position:absolute;left:543px;top:102px;" width="19" height="19" viewBox="0 0 19 19"><rect x="1" y="1" width="5" height="5" fill="#E6E8F0" stroke="#424242" stroke-width="1.2"/><rect x="12" y="1" width="5" height="5" fill="#E6E8F0" stroke="#424242" stroke-width="1.2"/><rect x="1" y="12" width="5" height="5" fill="#E6E8F0" stroke="#424242" stroke-width="1.2"/><path d="M11.5 3.5 H7 M9 1.8 L7 3.5 L9 5.2 M3.5 11.5 V7.5 M1.8 9.3 L3.5 7.5 L5.2 9.3" fill="none" stroke="#424242" stroke-width="1.2"/></svg>
<svg style="position:absolute;left:570.5px;top:102px;" width="19" height="19" viewBox="0 0 19 19"><rect x="1" y="1" width="5" height="5" fill="#E6E8F0" stroke="#424242" stroke-width="1.2"/><rect x="12" y="1" width="5" height="5" fill="#E6E8F0" stroke="#424242" stroke-width="1.2"/><rect x="1" y="12" width="5" height="5" fill="#E6E8F0" stroke="#424242" stroke-width="1.2"/><path d="M11.5 3.5 H7 M9 1.8 L7 3.5 L9 5.2 M3.5 11.5 V7.5 M1.8 9.3 L3.5 7.5 L5.2 9.3" fill="none" stroke="#424242" stroke-width="1.2"/><circle cx="13.5" cy="13" r="4.3" fill="#2E9B3A"/><path d="M11.3 13 L13 14.8 L16 11.4" fill="none" stroke="#fff" stroke-width="1.4"/></svg>
<svg style="position:absolute;left:597px;top:102px;" width="20" height="19" viewBox="0 0 20 19"><path d="M8.5 5 V1 H18.5 V11.5 H11" fill="#DDE1EA" stroke="#424242" stroke-width="1.3"/><path d="M12 10 V6.5 M14.5 10 V4 M17 10 V2.5" stroke="#6a6e78" stroke-width="1.3"/><rect x="0.8" y="5.3" width="9.2" height="13" fill="#424242"/><rect x="2.3" y="7" width="6.2" height="1.6" fill="#CFD6E5"/><rect x="6.6" y="15.3" width="1.6" height="1.6" fill="#CFD6E5"/></svg>
<div style="position:absolute;left:625px;top:99px;width:1px;height:23px;background:#7887A8;"></div>
<svg style="position:absolute;left:634px;top:102px;" width="20" height="19" viewBox="0 0 20 19"><path d="M5.5 9 V1 H17.5 V15 H11" fill="#E3E6EE" stroke="#424242" stroke-width="1.3"/><path d="M9 4.5 H15 M9 7.5 H15 M11 10.5 H15" stroke="#424242" stroke-width="1.1"/><rect x="0.8" y="10.8" width="9.5" height="7.2" fill="#3a3a3a"/><rect x="2.4000000000000004" y="12.3" width="2.6" height="4.2" fill="none" stroke="#fff" stroke-width="1"/><path d="M6.3999999999999995 13.200000000000001 L7.7 12.0 V17.0" fill="none" stroke="#fff" stroke-width="1.1"/></svg>
<div style="position:absolute;left:658px;top:97px;width:27px;height:28px;background:#FDFBF4;box-sizing:border-box;border:1px solid #3b4a6e;"></div>
<svg style="position:absolute;left:661px;top:102px;" width="21" height="19" viewBox="0 0 21 19"><rect x="3" y="1" width="16.5" height="14.5" fill="#E3E6EE" stroke="#424242" stroke-width="1.4"/><rect x="3" y="1" width="16.5" height="4" fill="#424242"/><path d="M3 9 H19.5 M3 12.3 H19.5 M8.5 5 V15.5 M14 5 V15.5" stroke="#424242" stroke-width="1.2"/><rect x="0.5" y="10.8" width="9.5" height="7.2" fill="#3a3a3a"/><rect x="2.1" y="12.3" width="2.6" height="4.2" fill="none" stroke="#fff" stroke-width="1"/><path d="M6.1 13.200000000000001 L7.4 12.0 V17.0" fill="none" stroke="#fff" stroke-width="1.1"/></svg>
<svg style="position:absolute;left:688px;top:102px;" width="20" height="19" viewBox="0 0 20 19"><path d="M6 9 V1.5 H13.5 L17.5 5.5 V15.5 H11" fill="#E3E6EE" stroke="#424242" stroke-width="1.4"/><rect x="0.8" y="10.8" width="9.5" height="7.2" fill="#3a3a3a"/><rect x="2.4000000000000004" y="12.3" width="2.6" height="4.2" fill="none" stroke="#fff" stroke-width="1"/><path d="M6.3999999999999995 13.200000000000001 L7.7 12.0 V17.0" fill="none" stroke="#fff" stroke-width="1.1"/></svg>
<div style="position:absolute;left:716px;top:99px;width:1px;height:23px;background:#7887A8;"></div>
<svg style="position:absolute;left:727px;top:104px;" width="16" height="13" viewBox="0 0 16 13"><path d="M1 1 H5" stroke="#424242" stroke-width="1.2"/><path d="M5 4 H14 M5 6.2 H14" stroke="#3FA535" stroke-width="1.4"/><path d="M5 8.6 H14 M3 11.5 H14" stroke="#424242" stroke-width="1.4"/><path d="M4 1 H14" stroke="#424242" stroke-width="1.2"/></svg>
<svg style="position:absolute;left:752px;top:103px;" width="17" height="15" viewBox="0 0 17 15"><path d="M2 3.5 C2.5 0.5 7 0.8 6.5 4 C6.2 5.8 4.3 6.5 4 8" fill="none" stroke="#1A56B0" stroke-width="1.6"/><path d="M0.5 1.5 L2 4.5 L4.6 2.8" fill="none" stroke="#1A56B0" stroke-width="1.4"/><path d="M9 3.5 H16 M7 6.5 H16 M9 9.5 H16 M6 12.8 H16" stroke="#424242" stroke-width="1.4"/></svg>
<div style="position:absolute;left:780px;top:99px;width:1px;height:23px;background:#7887A8;"></div>
<svg style="position:absolute;left:788px;top:102px;" width="22" height="18" viewBox="0 0 22 18"><g transform="translate(-788,-102)"><path d="M797.8 104 H807.4 M797.8 118 H807.4" stroke="#5a5e68" stroke-width="1.1"/><path d="M789.8 108.6 H798.4 M789.8 113.3 H798.4" stroke="#3a3a3a" stroke-width="2"/><path d="M808.2 110.9 H800.6 M803.6 107.4 L800 110.9 L803.6 114.4" fill="none" stroke="#0F4A94" stroke-width="2"/></g></svg>
<svg style="position:absolute;left:815px;top:102px;" width="22" height="18" viewBox="0 0 22 18"><g transform="translate(-815,-102)"><path d="M817.6 104 H827.2 M817.6 118 H827.2" stroke="#5a5e68" stroke-width="1.1"/><path d="M826.8 108.6 H835.2 M826.8 113.3 H835.2" stroke="#3a3a3a" stroke-width="2"/><path d="M817 110.9 H824.6 M821.6 107.4 L825.2 110.9 L821.6 114.4" fill="none" stroke="#0F4A94" stroke-width="2"/></g></svg>
<div style="position:absolute;left:844px;top:99px;width:1px;height:23px;background:#7887A8;"></div>
<svg style="position:absolute;left:853px;top:103px;" width="20" height="16" viewBox="0 0 20 16"><path d="M0.5 4.5 H7 M4.3 1.3 L7.5 4.5 L4.3 7.7" fill="none" stroke="#1A56B0" stroke-width="1.9"/><circle cx="13" cy="8.3" r="2.2" fill="none" stroke="#424242" stroke-width="1.2"/><path d="M15.2 6 V9.5 C15.2 11 17.8 11 17.8 8.3 C17.8 5 15.5 3 13 3 C10 3 7.8 5.3 7.8 8.3 C7.8 11.5 10 13.7 13 13.7 C14.3 13.7 15.4 13.3 16.3 12.6" fill="none" stroke="#424242" stroke-width="1.2"/></svg>
<svg style="position:absolute;left:882px;top:112px;" width="10" height="11" viewBox="0 0 10 11"><path d="M1 2 H9" stroke="#1e2a4a" stroke-width="1.1"/><path d="M1 6.3 H9 L5 10.2 Z" fill="#1e2a4a"/></svg>
<!-- gen_wm -->
<svg style="position:absolute;left:830px;top:940px;" width="260" height="90" viewBox="0 0 260 90"><g opacity="0.45"><g fill="none" stroke="#b6b6b6" stroke-width="10.6" stroke-linecap="round" stroke-linejoin="round"><path d="M53.8 17.3 V57.3 A16.4 16.4 0 0 1 20.9 57.3 V54.0 M53.8 66.8 H208.0 M131.3 66.8 L132.9 52.0 M152.7 66.8 L154.3 52.0 M169.1 66.8 L170.7 52.0 M185.9 66.8 L187.5 52.0"/><circle cx="91.2" cy="52.0" r="14.2"/><circle cx="222.3" cy="58.2" r="15.3"/></g><circle cx="83.4" cy="19.0" r="6.4" fill="#b6b6b6"/><circle cx="99.8" cy="19.0" r="6.4" fill="#b6b6b6"/><circle cx="124.2" cy="31.8" r="5.8" fill="#b6b6b6"/><circle cx="141.4" cy="31.8" r="5.8" fill="#b6b6b6"/></g></svg>
<span class="t" style="left:838.10px;top:971.00px;font-size:14.7px;line-height:18px;color:#1e1e1e;transform:scaleX(0.9910);">(local) (16.0 RTM)</span>
<span class="t" style="left:968.86px;top:971.00px;font-size:14.7px;line-height:18px;color:#1e1e1e;transform:scaleX(0.9486);">DESKTOP-EO86I7R\nader ...</span>
<div style="position:absolute;left:964px;top:972px;width:1px;height:17px;background:#C9C07A;"></div>
<div style="position:absolute;left:965px;top:972px;width:1px;height:17px;background:#FFFFFF;"></div>
<span class="t" style="left:970.54px;top:1007.00px;font-size:14.7px;line-height:18px;color:#ffffff;transform:scaleX(0.9593);">Ln 1</span>
<span class="t" style="left:843.67px;top:1017.90px;font-size:32.7px;line-height:39px;color:#b6b6b6;transform:scaleX(1.2561);opacity:0.45;-webkit-text-stroke:1.25px #b6b6b6;">mostaql.com</span>
</body></html>
